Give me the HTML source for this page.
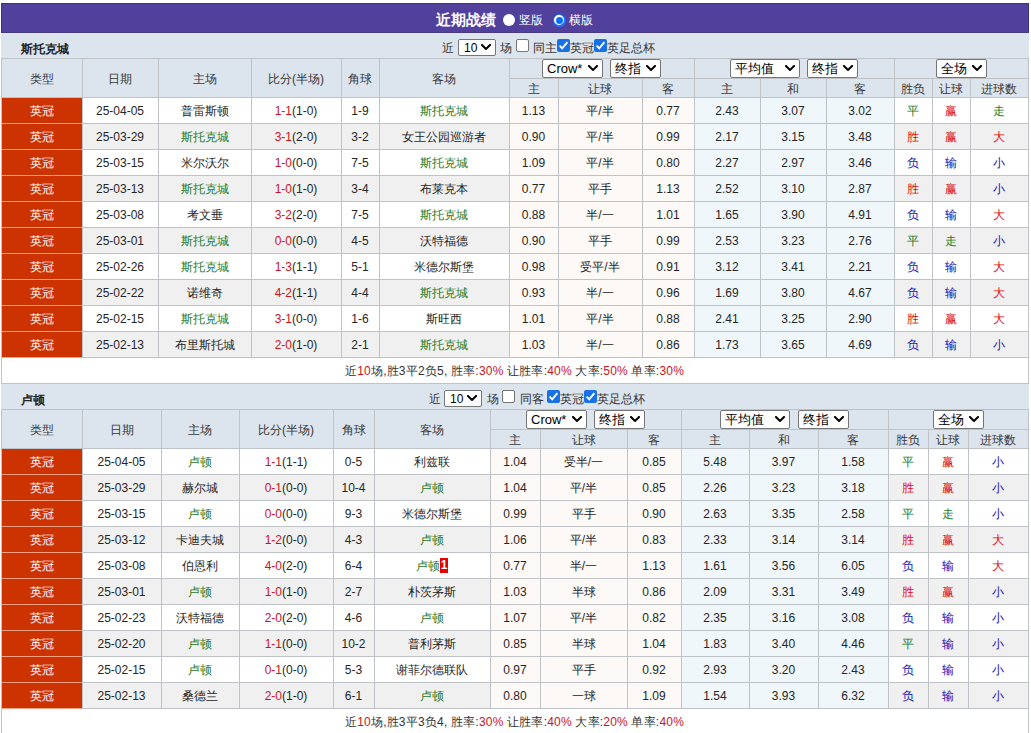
<!DOCTYPE html>
<html><head><meta charset="utf-8"><style>
html,body{margin:0;padding:0;background:#fff}
body{width:1031px;height:733px;overflow:hidden;position:relative;font-family:"Liberation Sans",sans-serif;font-size:12px;color:#262626}
.a{position:absolute;white-space:nowrap}
.t{text-align:center}
</style></head><body>
<div class="a" style="left:1px;top:3px;width:1026px;height:28px;background:#52419c;border:1px solid #3e3279;border-bottom-color:#46398a"></div>
<div class="a" style="left:436px;top:5px;height:30px;line-height:30px;font-size:15px;font-weight:bold;color:#fff">近期战绩</div>
<div class="a" style="left:503px;top:14px;width:12px;height:12px;border-radius:50%;background:#fff"></div>
<div class="a" style="left:519px;top:5px;height:30px;line-height:30px;font-size:12px;color:#fff">竖版</div>
<div class="a" style="left:552.5px;top:13.5px;width:13px;height:13px;border-radius:50%;background:#1a75ff"></div><div class="a" style="left:554px;top:15px;width:10px;height:10px;border-radius:50%;background:#fff"></div><div class="a" style="left:555.5px;top:16.5px;width:7px;height:7px;border-radius:50%;background:#0b6cf8"></div>
<div class="a" style="left:569px;top:5px;height:30px;line-height:30px;font-size:12px;color:#fff">横版</div>
<div class="a" style="left:1px;top:33px;width:1028px;height:25px;background:#dce4ee"></div>
<div class="a" style="left:21px;top:37px;height:25px;line-height:25px;font-weight:bold;color:#222">斯托克城</div>
<div class="a" style="left:442px;top:41px;line-height:14px;color:#333">近</div>
<div class="a" style="left:458px;top:39px;width:36px;height:15px;background:#fff;border:1px solid #767676;border-radius:2px"></div>
<div class="a" style="left:464px;top:40px;height:17px;line-height:17px;font-size:12px;color:#000;font-family:"Liberation Mono",monospace;letter-spacing:0.3px">10</div>
<svg class="a" style="left:481px;top:44px" width="10" height="6" viewBox="0 0 10 6"><path d="M1 1 L5.0 5 L9 1" fill="none" stroke="#000" stroke-width="2" stroke-linecap="square"/></svg>
<div class="a" style="left:500px;top:41px;line-height:14px;color:#333">场</div>
<div class="a" style="left:516px;top:39px;width:11px;height:11px;background:#fff;border:1px solid #767676;border-radius:2px"></div>
<div class="a" style="left:533px;top:41px;line-height:14px;color:#333">同主</div>
<div class="a" style="left:557px;top:39px;width:13px;height:13px;background:#1872e6;border-radius:2px"></div>
<svg class="a" style="left:557px;top:39px" width="13" height="13" viewBox="0 0 13 13"><path d="M2.6 6.6 L5.2 9.4 L10.4 3.2" fill="none" stroke="#fff" stroke-width="1.9"/></svg>
<div class="a" style="left:570px;top:41px;line-height:14px;color:#333">英冠</div>
<div class="a" style="left:594px;top:39px;width:13px;height:13px;background:#1872e6;border-radius:2px"></div>
<svg class="a" style="left:594px;top:39px" width="13" height="13" viewBox="0 0 13 13"><path d="M2.6 6.6 L5.2 9.4 L10.4 3.2" fill="none" stroke="#fff" stroke-width="1.9"/></svg>
<div class="a" style="left:607px;top:41px;line-height:14px;color:#333">英足总杯</div>
<div class="a" style="left:1px;top:58px;width:1028px;height:39px;background:#dce4ee"></div>
<div class="a" style="left:1px;top:58px;width:1028px;height:1px;background:#bfc2c6"></div>
<div class="a" style="left:509px;top:78px;width:520px;height:1px;background:#bfc2c6"></div>
<div class="a" style="left:1px;top:97px;width:1028px;height:1px;background:#bfc2c6"></div>
<div class="a" style="left:1px;top:58px;width:1px;height:40px;background:#bfc2c6"></div>
<div class="a" style="left:82px;top:58px;width:1px;height:40px;background:#bfc2c6"></div>
<div class="a" style="left:158px;top:58px;width:1px;height:40px;background:#bfc2c6"></div>
<div class="a" style="left:251px;top:58px;width:1px;height:40px;background:#bfc2c6"></div>
<div class="a" style="left:341px;top:58px;width:1px;height:40px;background:#bfc2c6"></div>
<div class="a" style="left:379px;top:58px;width:1px;height:40px;background:#bfc2c6"></div>
<div class="a" style="left:509px;top:58px;width:1px;height:40px;background:#bfc2c6"></div>
<div class="a" style="left:558px;top:78px;width:1px;height:20px;background:#bfc2c6"></div>
<div class="a" style="left:642px;top:78px;width:1px;height:20px;background:#bfc2c6"></div>
<div class="a" style="left:694px;top:58px;width:1px;height:40px;background:#bfc2c6"></div>
<div class="a" style="left:760px;top:78px;width:1px;height:20px;background:#bfc2c6"></div>
<div class="a" style="left:826px;top:78px;width:1px;height:20px;background:#bfc2c6"></div>
<div class="a" style="left:894px;top:58px;width:1px;height:40px;background:#bfc2c6"></div>
<div class="a" style="left:932px;top:78px;width:1px;height:20px;background:#bfc2c6"></div>
<div class="a" style="left:970px;top:78px;width:1px;height:20px;background:#bfc2c6"></div>
<div class="a" style="left:1028px;top:58px;width:1px;height:40px;background:#bfc2c6"></div>
<div class="a t" style="left:1.5px;top:60px;width:80px;height:38px;line-height:38px;color:#383838">类型</div>
<div class="a t" style="left:82.5px;top:60px;width:75px;height:38px;line-height:38px;color:#383838">日期</div>
<div class="a t" style="left:158.5px;top:60px;width:92px;height:38px;line-height:38px;color:#383838">主场</div>
<div class="a t" style="left:251.5px;top:60px;width:89px;height:38px;line-height:38px;color:#383838">比分(半场)</div>
<div class="a t" style="left:341.5px;top:60px;width:37px;height:38px;line-height:38px;color:#383838">角球</div>
<div class="a t" style="left:379.5px;top:60px;width:129px;height:38px;line-height:38px;color:#383838">客场</div>
<div class="a t" style="left:509.5px;top:80px;width:48px;height:18px;line-height:18px;color:#383838">主</div>
<div class="a t" style="left:558.5px;top:80px;width:83px;height:18px;line-height:18px;color:#383838">让球</div>
<div class="a t" style="left:642.5px;top:80px;width:51px;height:18px;line-height:18px;color:#383838">客</div>
<div class="a t" style="left:694.5px;top:80px;width:65px;height:18px;line-height:18px;color:#383838">主</div>
<div class="a t" style="left:760.5px;top:80px;width:65px;height:18px;line-height:18px;color:#383838">和</div>
<div class="a t" style="left:826.5px;top:80px;width:67px;height:18px;line-height:18px;color:#383838">客</div>
<div class="a t" style="left:894.5px;top:80px;width:37px;height:18px;line-height:18px;color:#383838">胜负</div>
<div class="a t" style="left:932.5px;top:80px;width:37px;height:18px;line-height:18px;color:#383838">让球</div>
<div class="a t" style="left:970.5px;top:80px;width:57px;height:18px;line-height:18px;color:#383838">进球数</div>
<div class="a" style="left:542px;top:59px;width:59px;height:17px;background:#fff;border:1px solid #767676;border-radius:2px"></div>
<div class="a" style="left:547px;top:59px;height:19px;line-height:19px;font-size:13px;color:#000;">Crow*</div>
<svg class="a" style="left:588px;top:65px" width="10" height="6" viewBox="0 0 10 6"><path d="M1 1 L5.0 5 L9 1" fill="none" stroke="#000" stroke-width="2" stroke-linecap="square"/></svg>
<div class="a" style="left:610px;top:59px;width:49px;height:17px;background:#fff;border:1px solid #767676;border-radius:2px"></div>
<div class="a" style="left:615px;top:59px;height:19px;line-height:19px;font-size:13px;color:#000;">终指</div>
<svg class="a" style="left:646px;top:65px" width="10" height="6" viewBox="0 0 10 6"><path d="M1 1 L5.0 5 L9 1" fill="none" stroke="#000" stroke-width="2" stroke-linecap="square"/></svg>
<div class="a" style="left:730px;top:59px;width:68px;height:17px;background:#fff;border:1px solid #767676;border-radius:2px"></div>
<div class="a" style="left:735px;top:59px;height:19px;line-height:19px;font-size:13px;color:#000;">平均值</div>
<svg class="a" style="left:785px;top:65px" width="10" height="6" viewBox="0 0 10 6"><path d="M1 1 L5.0 5 L9 1" fill="none" stroke="#000" stroke-width="2" stroke-linecap="square"/></svg>
<div class="a" style="left:807px;top:59px;width:49px;height:17px;background:#fff;border:1px solid #767676;border-radius:2px"></div>
<div class="a" style="left:812px;top:59px;height:19px;line-height:19px;font-size:13px;color:#000;">终指</div>
<svg class="a" style="left:843px;top:65px" width="10" height="6" viewBox="0 0 10 6"><path d="M1 1 L5.0 5 L9 1" fill="none" stroke="#000" stroke-width="2" stroke-linecap="square"/></svg>
<div class="a" style="left:936px;top:59px;width:49px;height:17px;background:#fff;border:1px solid #767676;border-radius:2px"></div>
<div class="a" style="left:941px;top:59px;height:19px;line-height:19px;font-size:13px;color:#000;">全场</div>
<svg class="a" style="left:972px;top:65px" width="10" height="6" viewBox="0 0 10 6"><path d="M1 1 L5.0 5 L9 1" fill="none" stroke="#000" stroke-width="2" stroke-linecap="square"/></svg>
<div class="a" style="left:2px;top:98px;width:80px;height:25px;background:#cc3300"></div>
<div class="a" style="left:83px;top:98px;width:75px;height:25px;background:#ffffff"></div>
<div class="a" style="left:159px;top:98px;width:92px;height:25px;background:#ffffff"></div>
<div class="a" style="left:252px;top:98px;width:89px;height:25px;background:#ffffff"></div>
<div class="a" style="left:342px;top:98px;width:37px;height:25px;background:#ffffff"></div>
<div class="a" style="left:380px;top:98px;width:129px;height:25px;background:#ffffff"></div>
<div class="a" style="left:510px;top:98px;width:48px;height:25px;background:#fdf9f6"></div>
<div class="a" style="left:559px;top:98px;width:83px;height:25px;background:#fdf9f6"></div>
<div class="a" style="left:643px;top:98px;width:51px;height:25px;background:#fdf9f6"></div>
<div class="a" style="left:695px;top:98px;width:65px;height:25px;background:#eff7fb"></div>
<div class="a" style="left:761px;top:98px;width:65px;height:25px;background:#eff7fb"></div>
<div class="a" style="left:827px;top:98px;width:67px;height:25px;background:#eff7fb"></div>
<div class="a" style="left:895px;top:98px;width:37px;height:25px;background:#ffffff"></div>
<div class="a" style="left:933px;top:98px;width:37px;height:25px;background:#ffffff"></div>
<div class="a" style="left:971px;top:98px;width:57px;height:25px;background:#ffffff"></div>
<div class="a" style="left:1px;top:123px;width:1028px;height:1px;background:#bfc2c6"></div>
<div class="a" style="left:1px;top:97px;width:1px;height:27px;background:#bfc2c6"></div>
<div class="a" style="left:82px;top:97px;width:1px;height:27px;background:#bfc2c6"></div>
<div class="a" style="left:158px;top:97px;width:1px;height:27px;background:#bfc2c6"></div>
<div class="a" style="left:251px;top:97px;width:1px;height:27px;background:#bfc2c6"></div>
<div class="a" style="left:341px;top:97px;width:1px;height:27px;background:#bfc2c6"></div>
<div class="a" style="left:379px;top:97px;width:1px;height:27px;background:#bfc2c6"></div>
<div class="a" style="left:509px;top:97px;width:1px;height:27px;background:#bfc2c6"></div>
<div class="a" style="left:558px;top:97px;width:1px;height:27px;background:#bfc2c6"></div>
<div class="a" style="left:642px;top:97px;width:1px;height:27px;background:#bfc2c6"></div>
<div class="a" style="left:694px;top:97px;width:1px;height:27px;background:#bfc2c6"></div>
<div class="a" style="left:760px;top:97px;width:1px;height:27px;background:#bfc2c6"></div>
<div class="a" style="left:826px;top:97px;width:1px;height:27px;background:#bfc2c6"></div>
<div class="a" style="left:894px;top:97px;width:1px;height:27px;background:#bfc2c6"></div>
<div class="a" style="left:932px;top:97px;width:1px;height:27px;background:#bfc2c6"></div>
<div class="a" style="left:970px;top:97px;width:1px;height:27px;background:#bfc2c6"></div>
<div class="a" style="left:1028px;top:97px;width:1px;height:27px;background:#bfc2c6"></div>
<div class="a" style="left:2px;top:98px;width:80px;height:25px;background:#cc3300"></div>
<div class="a" style="left:2px;top:123px;width:80px;height:1px;background:#f2a081"></div>
<div class="a t" style="left:1.5px;top:98.5px;width:80px;height:25px;line-height:25px;color:#fff">英冠</div>
<div class="a t" style="left:82.5px;top:98.5px;width:75px;height:25px;line-height:25px;">25-04-05</div>
<div class="a t" style="left:158.5px;top:98.5px;width:92px;height:25px;line-height:25px;">普雷斯顿</div>
<div class="a t" style="left:251.5px;top:98.5px;width:89px;height:25px;line-height:25px;"><span style="color:#c8141e">1-1</span>(1-0)</div>
<div class="a t" style="left:341.5px;top:98.5px;width:37px;height:25px;line-height:25px;">1-9</div>
<div class="a t" style="left:379.5px;top:98.5px;width:129px;height:25px;line-height:25px;color:#1f7a1f">斯托克城</div>
<div class="a t" style="left:509.5px;top:98.5px;width:48px;height:25px;line-height:25px;">1.13</div>
<div class="a t" style="left:558.5px;top:98.5px;width:83px;height:25px;line-height:25px;">平/半</div>
<div class="a t" style="left:642.5px;top:98.5px;width:51px;height:25px;line-height:25px;">0.77</div>
<div class="a t" style="left:694.5px;top:98.5px;width:65px;height:25px;line-height:25px;">2.43</div>
<div class="a t" style="left:760.5px;top:98.5px;width:65px;height:25px;line-height:25px;">3.07</div>
<div class="a t" style="left:826.5px;top:98.5px;width:67px;height:25px;line-height:25px;">3.02</div>
<div class="a t" style="left:894.5px;top:98.5px;width:37px;height:25px;line-height:25px;color:#1f7a1f">平</div>
<div class="a t" style="left:932.5px;top:98.5px;width:37px;height:25px;line-height:25px;color:#dd0a0a">赢</div>
<div class="a t" style="left:970.5px;top:98.5px;width:57px;height:25px;line-height:25px;color:#1f7a1f">走</div>
<div class="a" style="left:2px;top:124px;width:80px;height:25px;background:#cc3300"></div>
<div class="a" style="left:83px;top:124px;width:75px;height:25px;background:#f0f0f0"></div>
<div class="a" style="left:159px;top:124px;width:92px;height:25px;background:#f0f0f0"></div>
<div class="a" style="left:252px;top:124px;width:89px;height:25px;background:#f0f0f0"></div>
<div class="a" style="left:342px;top:124px;width:37px;height:25px;background:#f0f0f0"></div>
<div class="a" style="left:380px;top:124px;width:129px;height:25px;background:#f0f0f0"></div>
<div class="a" style="left:510px;top:124px;width:48px;height:25px;background:#fdf9f6"></div>
<div class="a" style="left:559px;top:124px;width:83px;height:25px;background:#fdf9f6"></div>
<div class="a" style="left:643px;top:124px;width:51px;height:25px;background:#fdf9f6"></div>
<div class="a" style="left:695px;top:124px;width:65px;height:25px;background:#eff7fb"></div>
<div class="a" style="left:761px;top:124px;width:65px;height:25px;background:#eff7fb"></div>
<div class="a" style="left:827px;top:124px;width:67px;height:25px;background:#eff7fb"></div>
<div class="a" style="left:895px;top:124px;width:37px;height:25px;background:#f0f0f0"></div>
<div class="a" style="left:933px;top:124px;width:37px;height:25px;background:#f0f0f0"></div>
<div class="a" style="left:971px;top:124px;width:57px;height:25px;background:#f0f0f0"></div>
<div class="a" style="left:1px;top:149px;width:1028px;height:1px;background:#bfc2c6"></div>
<div class="a" style="left:1px;top:123px;width:1px;height:27px;background:#bfc2c6"></div>
<div class="a" style="left:82px;top:123px;width:1px;height:27px;background:#bfc2c6"></div>
<div class="a" style="left:158px;top:123px;width:1px;height:27px;background:#bfc2c6"></div>
<div class="a" style="left:251px;top:123px;width:1px;height:27px;background:#bfc2c6"></div>
<div class="a" style="left:341px;top:123px;width:1px;height:27px;background:#bfc2c6"></div>
<div class="a" style="left:379px;top:123px;width:1px;height:27px;background:#bfc2c6"></div>
<div class="a" style="left:509px;top:123px;width:1px;height:27px;background:#bfc2c6"></div>
<div class="a" style="left:558px;top:123px;width:1px;height:27px;background:#bfc2c6"></div>
<div class="a" style="left:642px;top:123px;width:1px;height:27px;background:#bfc2c6"></div>
<div class="a" style="left:694px;top:123px;width:1px;height:27px;background:#bfc2c6"></div>
<div class="a" style="left:760px;top:123px;width:1px;height:27px;background:#bfc2c6"></div>
<div class="a" style="left:826px;top:123px;width:1px;height:27px;background:#bfc2c6"></div>
<div class="a" style="left:894px;top:123px;width:1px;height:27px;background:#bfc2c6"></div>
<div class="a" style="left:932px;top:123px;width:1px;height:27px;background:#bfc2c6"></div>
<div class="a" style="left:970px;top:123px;width:1px;height:27px;background:#bfc2c6"></div>
<div class="a" style="left:1028px;top:123px;width:1px;height:27px;background:#bfc2c6"></div>
<div class="a" style="left:2px;top:124px;width:80px;height:25px;background:#cc3300"></div>
<div class="a" style="left:2px;top:149px;width:80px;height:1px;background:#f2a081"></div>
<div class="a t" style="left:1.5px;top:124.5px;width:80px;height:25px;line-height:25px;color:#fff">英冠</div>
<div class="a t" style="left:82.5px;top:124.5px;width:75px;height:25px;line-height:25px;">25-03-29</div>
<div class="a t" style="left:158.5px;top:124.5px;width:92px;height:25px;line-height:25px;color:#1f7a1f">斯托克城</div>
<div class="a t" style="left:251.5px;top:124.5px;width:89px;height:25px;line-height:25px;"><span style="color:#c8141e">3-1</span>(2-0)</div>
<div class="a t" style="left:341.5px;top:124.5px;width:37px;height:25px;line-height:25px;">3-2</div>
<div class="a t" style="left:379.5px;top:124.5px;width:129px;height:25px;line-height:25px;">女王公园巡游者</div>
<div class="a t" style="left:509.5px;top:124.5px;width:48px;height:25px;line-height:25px;">0.90</div>
<div class="a t" style="left:558.5px;top:124.5px;width:83px;height:25px;line-height:25px;">平/半</div>
<div class="a t" style="left:642.5px;top:124.5px;width:51px;height:25px;line-height:25px;">0.99</div>
<div class="a t" style="left:694.5px;top:124.5px;width:65px;height:25px;line-height:25px;">2.17</div>
<div class="a t" style="left:760.5px;top:124.5px;width:65px;height:25px;line-height:25px;">3.15</div>
<div class="a t" style="left:826.5px;top:124.5px;width:67px;height:25px;line-height:25px;">3.48</div>
<div class="a t" style="left:894.5px;top:124.5px;width:37px;height:25px;line-height:25px;color:#dd0a0a">胜</div>
<div class="a t" style="left:932.5px;top:124.5px;width:37px;height:25px;line-height:25px;color:#dd0a0a">赢</div>
<div class="a t" style="left:970.5px;top:124.5px;width:57px;height:25px;line-height:25px;color:#dd0a0a">大</div>
<div class="a" style="left:2px;top:150px;width:80px;height:25px;background:#cc3300"></div>
<div class="a" style="left:83px;top:150px;width:75px;height:25px;background:#ffffff"></div>
<div class="a" style="left:159px;top:150px;width:92px;height:25px;background:#ffffff"></div>
<div class="a" style="left:252px;top:150px;width:89px;height:25px;background:#ffffff"></div>
<div class="a" style="left:342px;top:150px;width:37px;height:25px;background:#ffffff"></div>
<div class="a" style="left:380px;top:150px;width:129px;height:25px;background:#ffffff"></div>
<div class="a" style="left:510px;top:150px;width:48px;height:25px;background:#fdf9f6"></div>
<div class="a" style="left:559px;top:150px;width:83px;height:25px;background:#fdf9f6"></div>
<div class="a" style="left:643px;top:150px;width:51px;height:25px;background:#fdf9f6"></div>
<div class="a" style="left:695px;top:150px;width:65px;height:25px;background:#eff7fb"></div>
<div class="a" style="left:761px;top:150px;width:65px;height:25px;background:#eff7fb"></div>
<div class="a" style="left:827px;top:150px;width:67px;height:25px;background:#eff7fb"></div>
<div class="a" style="left:895px;top:150px;width:37px;height:25px;background:#ffffff"></div>
<div class="a" style="left:933px;top:150px;width:37px;height:25px;background:#ffffff"></div>
<div class="a" style="left:971px;top:150px;width:57px;height:25px;background:#ffffff"></div>
<div class="a" style="left:1px;top:175px;width:1028px;height:1px;background:#bfc2c6"></div>
<div class="a" style="left:1px;top:149px;width:1px;height:27px;background:#bfc2c6"></div>
<div class="a" style="left:82px;top:149px;width:1px;height:27px;background:#bfc2c6"></div>
<div class="a" style="left:158px;top:149px;width:1px;height:27px;background:#bfc2c6"></div>
<div class="a" style="left:251px;top:149px;width:1px;height:27px;background:#bfc2c6"></div>
<div class="a" style="left:341px;top:149px;width:1px;height:27px;background:#bfc2c6"></div>
<div class="a" style="left:379px;top:149px;width:1px;height:27px;background:#bfc2c6"></div>
<div class="a" style="left:509px;top:149px;width:1px;height:27px;background:#bfc2c6"></div>
<div class="a" style="left:558px;top:149px;width:1px;height:27px;background:#bfc2c6"></div>
<div class="a" style="left:642px;top:149px;width:1px;height:27px;background:#bfc2c6"></div>
<div class="a" style="left:694px;top:149px;width:1px;height:27px;background:#bfc2c6"></div>
<div class="a" style="left:760px;top:149px;width:1px;height:27px;background:#bfc2c6"></div>
<div class="a" style="left:826px;top:149px;width:1px;height:27px;background:#bfc2c6"></div>
<div class="a" style="left:894px;top:149px;width:1px;height:27px;background:#bfc2c6"></div>
<div class="a" style="left:932px;top:149px;width:1px;height:27px;background:#bfc2c6"></div>
<div class="a" style="left:970px;top:149px;width:1px;height:27px;background:#bfc2c6"></div>
<div class="a" style="left:1028px;top:149px;width:1px;height:27px;background:#bfc2c6"></div>
<div class="a" style="left:2px;top:150px;width:80px;height:25px;background:#cc3300"></div>
<div class="a" style="left:2px;top:175px;width:80px;height:1px;background:#f2a081"></div>
<div class="a t" style="left:1.5px;top:150.5px;width:80px;height:25px;line-height:25px;color:#fff">英冠</div>
<div class="a t" style="left:82.5px;top:150.5px;width:75px;height:25px;line-height:25px;">25-03-15</div>
<div class="a t" style="left:158.5px;top:150.5px;width:92px;height:25px;line-height:25px;">米尔沃尔</div>
<div class="a t" style="left:251.5px;top:150.5px;width:89px;height:25px;line-height:25px;"><span style="color:#c8141e">1-0</span>(0-0)</div>
<div class="a t" style="left:341.5px;top:150.5px;width:37px;height:25px;line-height:25px;">7-5</div>
<div class="a t" style="left:379.5px;top:150.5px;width:129px;height:25px;line-height:25px;color:#1f7a1f">斯托克城</div>
<div class="a t" style="left:509.5px;top:150.5px;width:48px;height:25px;line-height:25px;">1.09</div>
<div class="a t" style="left:558.5px;top:150.5px;width:83px;height:25px;line-height:25px;">平/半</div>
<div class="a t" style="left:642.5px;top:150.5px;width:51px;height:25px;line-height:25px;">0.80</div>
<div class="a t" style="left:694.5px;top:150.5px;width:65px;height:25px;line-height:25px;">2.27</div>
<div class="a t" style="left:760.5px;top:150.5px;width:65px;height:25px;line-height:25px;">2.97</div>
<div class="a t" style="left:826.5px;top:150.5px;width:67px;height:25px;line-height:25px;">3.46</div>
<div class="a t" style="left:894.5px;top:150.5px;width:37px;height:25px;line-height:25px;color:#1111b0">负</div>
<div class="a t" style="left:932.5px;top:150.5px;width:37px;height:25px;line-height:25px;color:#1111b0">输</div>
<div class="a t" style="left:970.5px;top:150.5px;width:57px;height:25px;line-height:25px;color:#1111b0">小</div>
<div class="a" style="left:2px;top:176px;width:80px;height:25px;background:#cc3300"></div>
<div class="a" style="left:83px;top:176px;width:75px;height:25px;background:#f0f0f0"></div>
<div class="a" style="left:159px;top:176px;width:92px;height:25px;background:#f0f0f0"></div>
<div class="a" style="left:252px;top:176px;width:89px;height:25px;background:#f0f0f0"></div>
<div class="a" style="left:342px;top:176px;width:37px;height:25px;background:#f0f0f0"></div>
<div class="a" style="left:380px;top:176px;width:129px;height:25px;background:#f0f0f0"></div>
<div class="a" style="left:510px;top:176px;width:48px;height:25px;background:#fdf9f6"></div>
<div class="a" style="left:559px;top:176px;width:83px;height:25px;background:#fdf9f6"></div>
<div class="a" style="left:643px;top:176px;width:51px;height:25px;background:#fdf9f6"></div>
<div class="a" style="left:695px;top:176px;width:65px;height:25px;background:#eff7fb"></div>
<div class="a" style="left:761px;top:176px;width:65px;height:25px;background:#eff7fb"></div>
<div class="a" style="left:827px;top:176px;width:67px;height:25px;background:#eff7fb"></div>
<div class="a" style="left:895px;top:176px;width:37px;height:25px;background:#f0f0f0"></div>
<div class="a" style="left:933px;top:176px;width:37px;height:25px;background:#f0f0f0"></div>
<div class="a" style="left:971px;top:176px;width:57px;height:25px;background:#f0f0f0"></div>
<div class="a" style="left:1px;top:201px;width:1028px;height:1px;background:#bfc2c6"></div>
<div class="a" style="left:1px;top:175px;width:1px;height:27px;background:#bfc2c6"></div>
<div class="a" style="left:82px;top:175px;width:1px;height:27px;background:#bfc2c6"></div>
<div class="a" style="left:158px;top:175px;width:1px;height:27px;background:#bfc2c6"></div>
<div class="a" style="left:251px;top:175px;width:1px;height:27px;background:#bfc2c6"></div>
<div class="a" style="left:341px;top:175px;width:1px;height:27px;background:#bfc2c6"></div>
<div class="a" style="left:379px;top:175px;width:1px;height:27px;background:#bfc2c6"></div>
<div class="a" style="left:509px;top:175px;width:1px;height:27px;background:#bfc2c6"></div>
<div class="a" style="left:558px;top:175px;width:1px;height:27px;background:#bfc2c6"></div>
<div class="a" style="left:642px;top:175px;width:1px;height:27px;background:#bfc2c6"></div>
<div class="a" style="left:694px;top:175px;width:1px;height:27px;background:#bfc2c6"></div>
<div class="a" style="left:760px;top:175px;width:1px;height:27px;background:#bfc2c6"></div>
<div class="a" style="left:826px;top:175px;width:1px;height:27px;background:#bfc2c6"></div>
<div class="a" style="left:894px;top:175px;width:1px;height:27px;background:#bfc2c6"></div>
<div class="a" style="left:932px;top:175px;width:1px;height:27px;background:#bfc2c6"></div>
<div class="a" style="left:970px;top:175px;width:1px;height:27px;background:#bfc2c6"></div>
<div class="a" style="left:1028px;top:175px;width:1px;height:27px;background:#bfc2c6"></div>
<div class="a" style="left:2px;top:176px;width:80px;height:25px;background:#cc3300"></div>
<div class="a" style="left:2px;top:201px;width:80px;height:1px;background:#f2a081"></div>
<div class="a t" style="left:1.5px;top:176.5px;width:80px;height:25px;line-height:25px;color:#fff">英冠</div>
<div class="a t" style="left:82.5px;top:176.5px;width:75px;height:25px;line-height:25px;">25-03-13</div>
<div class="a t" style="left:158.5px;top:176.5px;width:92px;height:25px;line-height:25px;color:#1f7a1f">斯托克城</div>
<div class="a t" style="left:251.5px;top:176.5px;width:89px;height:25px;line-height:25px;"><span style="color:#c8141e">1-0</span>(1-0)</div>
<div class="a t" style="left:341.5px;top:176.5px;width:37px;height:25px;line-height:25px;">3-4</div>
<div class="a t" style="left:379.5px;top:176.5px;width:129px;height:25px;line-height:25px;">布莱克本</div>
<div class="a t" style="left:509.5px;top:176.5px;width:48px;height:25px;line-height:25px;">0.77</div>
<div class="a t" style="left:558.5px;top:176.5px;width:83px;height:25px;line-height:25px;">平手</div>
<div class="a t" style="left:642.5px;top:176.5px;width:51px;height:25px;line-height:25px;">1.13</div>
<div class="a t" style="left:694.5px;top:176.5px;width:65px;height:25px;line-height:25px;">2.52</div>
<div class="a t" style="left:760.5px;top:176.5px;width:65px;height:25px;line-height:25px;">3.10</div>
<div class="a t" style="left:826.5px;top:176.5px;width:67px;height:25px;line-height:25px;">2.87</div>
<div class="a t" style="left:894.5px;top:176.5px;width:37px;height:25px;line-height:25px;color:#dd0a0a">胜</div>
<div class="a t" style="left:932.5px;top:176.5px;width:37px;height:25px;line-height:25px;color:#dd0a0a">赢</div>
<div class="a t" style="left:970.5px;top:176.5px;width:57px;height:25px;line-height:25px;color:#1111b0">小</div>
<div class="a" style="left:2px;top:202px;width:80px;height:25px;background:#cc3300"></div>
<div class="a" style="left:83px;top:202px;width:75px;height:25px;background:#ffffff"></div>
<div class="a" style="left:159px;top:202px;width:92px;height:25px;background:#ffffff"></div>
<div class="a" style="left:252px;top:202px;width:89px;height:25px;background:#ffffff"></div>
<div class="a" style="left:342px;top:202px;width:37px;height:25px;background:#ffffff"></div>
<div class="a" style="left:380px;top:202px;width:129px;height:25px;background:#ffffff"></div>
<div class="a" style="left:510px;top:202px;width:48px;height:25px;background:#fdf9f6"></div>
<div class="a" style="left:559px;top:202px;width:83px;height:25px;background:#fdf9f6"></div>
<div class="a" style="left:643px;top:202px;width:51px;height:25px;background:#fdf9f6"></div>
<div class="a" style="left:695px;top:202px;width:65px;height:25px;background:#eff7fb"></div>
<div class="a" style="left:761px;top:202px;width:65px;height:25px;background:#eff7fb"></div>
<div class="a" style="left:827px;top:202px;width:67px;height:25px;background:#eff7fb"></div>
<div class="a" style="left:895px;top:202px;width:37px;height:25px;background:#ffffff"></div>
<div class="a" style="left:933px;top:202px;width:37px;height:25px;background:#ffffff"></div>
<div class="a" style="left:971px;top:202px;width:57px;height:25px;background:#ffffff"></div>
<div class="a" style="left:1px;top:227px;width:1028px;height:1px;background:#bfc2c6"></div>
<div class="a" style="left:1px;top:201px;width:1px;height:27px;background:#bfc2c6"></div>
<div class="a" style="left:82px;top:201px;width:1px;height:27px;background:#bfc2c6"></div>
<div class="a" style="left:158px;top:201px;width:1px;height:27px;background:#bfc2c6"></div>
<div class="a" style="left:251px;top:201px;width:1px;height:27px;background:#bfc2c6"></div>
<div class="a" style="left:341px;top:201px;width:1px;height:27px;background:#bfc2c6"></div>
<div class="a" style="left:379px;top:201px;width:1px;height:27px;background:#bfc2c6"></div>
<div class="a" style="left:509px;top:201px;width:1px;height:27px;background:#bfc2c6"></div>
<div class="a" style="left:558px;top:201px;width:1px;height:27px;background:#bfc2c6"></div>
<div class="a" style="left:642px;top:201px;width:1px;height:27px;background:#bfc2c6"></div>
<div class="a" style="left:694px;top:201px;width:1px;height:27px;background:#bfc2c6"></div>
<div class="a" style="left:760px;top:201px;width:1px;height:27px;background:#bfc2c6"></div>
<div class="a" style="left:826px;top:201px;width:1px;height:27px;background:#bfc2c6"></div>
<div class="a" style="left:894px;top:201px;width:1px;height:27px;background:#bfc2c6"></div>
<div class="a" style="left:932px;top:201px;width:1px;height:27px;background:#bfc2c6"></div>
<div class="a" style="left:970px;top:201px;width:1px;height:27px;background:#bfc2c6"></div>
<div class="a" style="left:1028px;top:201px;width:1px;height:27px;background:#bfc2c6"></div>
<div class="a" style="left:2px;top:202px;width:80px;height:25px;background:#cc3300"></div>
<div class="a" style="left:2px;top:227px;width:80px;height:1px;background:#f2a081"></div>
<div class="a t" style="left:1.5px;top:202.5px;width:80px;height:25px;line-height:25px;color:#fff">英冠</div>
<div class="a t" style="left:82.5px;top:202.5px;width:75px;height:25px;line-height:25px;">25-03-08</div>
<div class="a t" style="left:158.5px;top:202.5px;width:92px;height:25px;line-height:25px;">考文垂</div>
<div class="a t" style="left:251.5px;top:202.5px;width:89px;height:25px;line-height:25px;"><span style="color:#c8141e">3-2</span>(2-0)</div>
<div class="a t" style="left:341.5px;top:202.5px;width:37px;height:25px;line-height:25px;">7-5</div>
<div class="a t" style="left:379.5px;top:202.5px;width:129px;height:25px;line-height:25px;color:#1f7a1f">斯托克城</div>
<div class="a t" style="left:509.5px;top:202.5px;width:48px;height:25px;line-height:25px;">0.88</div>
<div class="a t" style="left:558.5px;top:202.5px;width:83px;height:25px;line-height:25px;">半/一</div>
<div class="a t" style="left:642.5px;top:202.5px;width:51px;height:25px;line-height:25px;">1.01</div>
<div class="a t" style="left:694.5px;top:202.5px;width:65px;height:25px;line-height:25px;">1.65</div>
<div class="a t" style="left:760.5px;top:202.5px;width:65px;height:25px;line-height:25px;">3.90</div>
<div class="a t" style="left:826.5px;top:202.5px;width:67px;height:25px;line-height:25px;">4.91</div>
<div class="a t" style="left:894.5px;top:202.5px;width:37px;height:25px;line-height:25px;color:#1111b0">负</div>
<div class="a t" style="left:932.5px;top:202.5px;width:37px;height:25px;line-height:25px;color:#1111b0">输</div>
<div class="a t" style="left:970.5px;top:202.5px;width:57px;height:25px;line-height:25px;color:#dd0a0a">大</div>
<div class="a" style="left:2px;top:228px;width:80px;height:25px;background:#cc3300"></div>
<div class="a" style="left:83px;top:228px;width:75px;height:25px;background:#f0f0f0"></div>
<div class="a" style="left:159px;top:228px;width:92px;height:25px;background:#f0f0f0"></div>
<div class="a" style="left:252px;top:228px;width:89px;height:25px;background:#f0f0f0"></div>
<div class="a" style="left:342px;top:228px;width:37px;height:25px;background:#f0f0f0"></div>
<div class="a" style="left:380px;top:228px;width:129px;height:25px;background:#f0f0f0"></div>
<div class="a" style="left:510px;top:228px;width:48px;height:25px;background:#fdf9f6"></div>
<div class="a" style="left:559px;top:228px;width:83px;height:25px;background:#fdf9f6"></div>
<div class="a" style="left:643px;top:228px;width:51px;height:25px;background:#fdf9f6"></div>
<div class="a" style="left:695px;top:228px;width:65px;height:25px;background:#eff7fb"></div>
<div class="a" style="left:761px;top:228px;width:65px;height:25px;background:#eff7fb"></div>
<div class="a" style="left:827px;top:228px;width:67px;height:25px;background:#eff7fb"></div>
<div class="a" style="left:895px;top:228px;width:37px;height:25px;background:#f0f0f0"></div>
<div class="a" style="left:933px;top:228px;width:37px;height:25px;background:#f0f0f0"></div>
<div class="a" style="left:971px;top:228px;width:57px;height:25px;background:#f0f0f0"></div>
<div class="a" style="left:1px;top:253px;width:1028px;height:1px;background:#bfc2c6"></div>
<div class="a" style="left:1px;top:227px;width:1px;height:27px;background:#bfc2c6"></div>
<div class="a" style="left:82px;top:227px;width:1px;height:27px;background:#bfc2c6"></div>
<div class="a" style="left:158px;top:227px;width:1px;height:27px;background:#bfc2c6"></div>
<div class="a" style="left:251px;top:227px;width:1px;height:27px;background:#bfc2c6"></div>
<div class="a" style="left:341px;top:227px;width:1px;height:27px;background:#bfc2c6"></div>
<div class="a" style="left:379px;top:227px;width:1px;height:27px;background:#bfc2c6"></div>
<div class="a" style="left:509px;top:227px;width:1px;height:27px;background:#bfc2c6"></div>
<div class="a" style="left:558px;top:227px;width:1px;height:27px;background:#bfc2c6"></div>
<div class="a" style="left:642px;top:227px;width:1px;height:27px;background:#bfc2c6"></div>
<div class="a" style="left:694px;top:227px;width:1px;height:27px;background:#bfc2c6"></div>
<div class="a" style="left:760px;top:227px;width:1px;height:27px;background:#bfc2c6"></div>
<div class="a" style="left:826px;top:227px;width:1px;height:27px;background:#bfc2c6"></div>
<div class="a" style="left:894px;top:227px;width:1px;height:27px;background:#bfc2c6"></div>
<div class="a" style="left:932px;top:227px;width:1px;height:27px;background:#bfc2c6"></div>
<div class="a" style="left:970px;top:227px;width:1px;height:27px;background:#bfc2c6"></div>
<div class="a" style="left:1028px;top:227px;width:1px;height:27px;background:#bfc2c6"></div>
<div class="a" style="left:2px;top:228px;width:80px;height:25px;background:#cc3300"></div>
<div class="a" style="left:2px;top:253px;width:80px;height:1px;background:#f2a081"></div>
<div class="a t" style="left:1.5px;top:228.5px;width:80px;height:25px;line-height:25px;color:#fff">英冠</div>
<div class="a t" style="left:82.5px;top:228.5px;width:75px;height:25px;line-height:25px;">25-03-01</div>
<div class="a t" style="left:158.5px;top:228.5px;width:92px;height:25px;line-height:25px;color:#1f7a1f">斯托克城</div>
<div class="a t" style="left:251.5px;top:228.5px;width:89px;height:25px;line-height:25px;"><span style="color:#c8141e">0-0</span>(0-0)</div>
<div class="a t" style="left:341.5px;top:228.5px;width:37px;height:25px;line-height:25px;">4-5</div>
<div class="a t" style="left:379.5px;top:228.5px;width:129px;height:25px;line-height:25px;">沃特福德</div>
<div class="a t" style="left:509.5px;top:228.5px;width:48px;height:25px;line-height:25px;">0.90</div>
<div class="a t" style="left:558.5px;top:228.5px;width:83px;height:25px;line-height:25px;">平手</div>
<div class="a t" style="left:642.5px;top:228.5px;width:51px;height:25px;line-height:25px;">0.99</div>
<div class="a t" style="left:694.5px;top:228.5px;width:65px;height:25px;line-height:25px;">2.53</div>
<div class="a t" style="left:760.5px;top:228.5px;width:65px;height:25px;line-height:25px;">3.23</div>
<div class="a t" style="left:826.5px;top:228.5px;width:67px;height:25px;line-height:25px;">2.76</div>
<div class="a t" style="left:894.5px;top:228.5px;width:37px;height:25px;line-height:25px;color:#1f7a1f">平</div>
<div class="a t" style="left:932.5px;top:228.5px;width:37px;height:25px;line-height:25px;color:#1f7a1f">走</div>
<div class="a t" style="left:970.5px;top:228.5px;width:57px;height:25px;line-height:25px;color:#1111b0">小</div>
<div class="a" style="left:2px;top:254px;width:80px;height:25px;background:#cc3300"></div>
<div class="a" style="left:83px;top:254px;width:75px;height:25px;background:#ffffff"></div>
<div class="a" style="left:159px;top:254px;width:92px;height:25px;background:#ffffff"></div>
<div class="a" style="left:252px;top:254px;width:89px;height:25px;background:#ffffff"></div>
<div class="a" style="left:342px;top:254px;width:37px;height:25px;background:#ffffff"></div>
<div class="a" style="left:380px;top:254px;width:129px;height:25px;background:#ffffff"></div>
<div class="a" style="left:510px;top:254px;width:48px;height:25px;background:#fdf9f6"></div>
<div class="a" style="left:559px;top:254px;width:83px;height:25px;background:#fdf9f6"></div>
<div class="a" style="left:643px;top:254px;width:51px;height:25px;background:#fdf9f6"></div>
<div class="a" style="left:695px;top:254px;width:65px;height:25px;background:#eff7fb"></div>
<div class="a" style="left:761px;top:254px;width:65px;height:25px;background:#eff7fb"></div>
<div class="a" style="left:827px;top:254px;width:67px;height:25px;background:#eff7fb"></div>
<div class="a" style="left:895px;top:254px;width:37px;height:25px;background:#ffffff"></div>
<div class="a" style="left:933px;top:254px;width:37px;height:25px;background:#ffffff"></div>
<div class="a" style="left:971px;top:254px;width:57px;height:25px;background:#ffffff"></div>
<div class="a" style="left:1px;top:279px;width:1028px;height:1px;background:#bfc2c6"></div>
<div class="a" style="left:1px;top:253px;width:1px;height:27px;background:#bfc2c6"></div>
<div class="a" style="left:82px;top:253px;width:1px;height:27px;background:#bfc2c6"></div>
<div class="a" style="left:158px;top:253px;width:1px;height:27px;background:#bfc2c6"></div>
<div class="a" style="left:251px;top:253px;width:1px;height:27px;background:#bfc2c6"></div>
<div class="a" style="left:341px;top:253px;width:1px;height:27px;background:#bfc2c6"></div>
<div class="a" style="left:379px;top:253px;width:1px;height:27px;background:#bfc2c6"></div>
<div class="a" style="left:509px;top:253px;width:1px;height:27px;background:#bfc2c6"></div>
<div class="a" style="left:558px;top:253px;width:1px;height:27px;background:#bfc2c6"></div>
<div class="a" style="left:642px;top:253px;width:1px;height:27px;background:#bfc2c6"></div>
<div class="a" style="left:694px;top:253px;width:1px;height:27px;background:#bfc2c6"></div>
<div class="a" style="left:760px;top:253px;width:1px;height:27px;background:#bfc2c6"></div>
<div class="a" style="left:826px;top:253px;width:1px;height:27px;background:#bfc2c6"></div>
<div class="a" style="left:894px;top:253px;width:1px;height:27px;background:#bfc2c6"></div>
<div class="a" style="left:932px;top:253px;width:1px;height:27px;background:#bfc2c6"></div>
<div class="a" style="left:970px;top:253px;width:1px;height:27px;background:#bfc2c6"></div>
<div class="a" style="left:1028px;top:253px;width:1px;height:27px;background:#bfc2c6"></div>
<div class="a" style="left:2px;top:254px;width:80px;height:25px;background:#cc3300"></div>
<div class="a" style="left:2px;top:279px;width:80px;height:1px;background:#f2a081"></div>
<div class="a t" style="left:1.5px;top:254.5px;width:80px;height:25px;line-height:25px;color:#fff">英冠</div>
<div class="a t" style="left:82.5px;top:254.5px;width:75px;height:25px;line-height:25px;">25-02-26</div>
<div class="a t" style="left:158.5px;top:254.5px;width:92px;height:25px;line-height:25px;color:#1f7a1f">斯托克城</div>
<div class="a t" style="left:251.5px;top:254.5px;width:89px;height:25px;line-height:25px;"><span style="color:#c8141e">1-3</span>(1-1)</div>
<div class="a t" style="left:341.5px;top:254.5px;width:37px;height:25px;line-height:25px;">5-1</div>
<div class="a t" style="left:379.5px;top:254.5px;width:129px;height:25px;line-height:25px;">米德尔斯堡</div>
<div class="a t" style="left:509.5px;top:254.5px;width:48px;height:25px;line-height:25px;">0.98</div>
<div class="a t" style="left:558.5px;top:254.5px;width:83px;height:25px;line-height:25px;">受平/半</div>
<div class="a t" style="left:642.5px;top:254.5px;width:51px;height:25px;line-height:25px;">0.91</div>
<div class="a t" style="left:694.5px;top:254.5px;width:65px;height:25px;line-height:25px;">3.12</div>
<div class="a t" style="left:760.5px;top:254.5px;width:65px;height:25px;line-height:25px;">3.41</div>
<div class="a t" style="left:826.5px;top:254.5px;width:67px;height:25px;line-height:25px;">2.21</div>
<div class="a t" style="left:894.5px;top:254.5px;width:37px;height:25px;line-height:25px;color:#1111b0">负</div>
<div class="a t" style="left:932.5px;top:254.5px;width:37px;height:25px;line-height:25px;color:#1111b0">输</div>
<div class="a t" style="left:970.5px;top:254.5px;width:57px;height:25px;line-height:25px;color:#dd0a0a">大</div>
<div class="a" style="left:2px;top:280px;width:80px;height:25px;background:#cc3300"></div>
<div class="a" style="left:83px;top:280px;width:75px;height:25px;background:#f0f0f0"></div>
<div class="a" style="left:159px;top:280px;width:92px;height:25px;background:#f0f0f0"></div>
<div class="a" style="left:252px;top:280px;width:89px;height:25px;background:#f0f0f0"></div>
<div class="a" style="left:342px;top:280px;width:37px;height:25px;background:#f0f0f0"></div>
<div class="a" style="left:380px;top:280px;width:129px;height:25px;background:#f0f0f0"></div>
<div class="a" style="left:510px;top:280px;width:48px;height:25px;background:#fdf9f6"></div>
<div class="a" style="left:559px;top:280px;width:83px;height:25px;background:#fdf9f6"></div>
<div class="a" style="left:643px;top:280px;width:51px;height:25px;background:#fdf9f6"></div>
<div class="a" style="left:695px;top:280px;width:65px;height:25px;background:#eff7fb"></div>
<div class="a" style="left:761px;top:280px;width:65px;height:25px;background:#eff7fb"></div>
<div class="a" style="left:827px;top:280px;width:67px;height:25px;background:#eff7fb"></div>
<div class="a" style="left:895px;top:280px;width:37px;height:25px;background:#f0f0f0"></div>
<div class="a" style="left:933px;top:280px;width:37px;height:25px;background:#f0f0f0"></div>
<div class="a" style="left:971px;top:280px;width:57px;height:25px;background:#f0f0f0"></div>
<div class="a" style="left:1px;top:305px;width:1028px;height:1px;background:#bfc2c6"></div>
<div class="a" style="left:1px;top:279px;width:1px;height:27px;background:#bfc2c6"></div>
<div class="a" style="left:82px;top:279px;width:1px;height:27px;background:#bfc2c6"></div>
<div class="a" style="left:158px;top:279px;width:1px;height:27px;background:#bfc2c6"></div>
<div class="a" style="left:251px;top:279px;width:1px;height:27px;background:#bfc2c6"></div>
<div class="a" style="left:341px;top:279px;width:1px;height:27px;background:#bfc2c6"></div>
<div class="a" style="left:379px;top:279px;width:1px;height:27px;background:#bfc2c6"></div>
<div class="a" style="left:509px;top:279px;width:1px;height:27px;background:#bfc2c6"></div>
<div class="a" style="left:558px;top:279px;width:1px;height:27px;background:#bfc2c6"></div>
<div class="a" style="left:642px;top:279px;width:1px;height:27px;background:#bfc2c6"></div>
<div class="a" style="left:694px;top:279px;width:1px;height:27px;background:#bfc2c6"></div>
<div class="a" style="left:760px;top:279px;width:1px;height:27px;background:#bfc2c6"></div>
<div class="a" style="left:826px;top:279px;width:1px;height:27px;background:#bfc2c6"></div>
<div class="a" style="left:894px;top:279px;width:1px;height:27px;background:#bfc2c6"></div>
<div class="a" style="left:932px;top:279px;width:1px;height:27px;background:#bfc2c6"></div>
<div class="a" style="left:970px;top:279px;width:1px;height:27px;background:#bfc2c6"></div>
<div class="a" style="left:1028px;top:279px;width:1px;height:27px;background:#bfc2c6"></div>
<div class="a" style="left:2px;top:280px;width:80px;height:25px;background:#cc3300"></div>
<div class="a" style="left:2px;top:305px;width:80px;height:1px;background:#f2a081"></div>
<div class="a t" style="left:1.5px;top:280.5px;width:80px;height:25px;line-height:25px;color:#fff">英冠</div>
<div class="a t" style="left:82.5px;top:280.5px;width:75px;height:25px;line-height:25px;">25-02-22</div>
<div class="a t" style="left:158.5px;top:280.5px;width:92px;height:25px;line-height:25px;">诺维奇</div>
<div class="a t" style="left:251.5px;top:280.5px;width:89px;height:25px;line-height:25px;"><span style="color:#c8141e">4-2</span>(1-1)</div>
<div class="a t" style="left:341.5px;top:280.5px;width:37px;height:25px;line-height:25px;">4-4</div>
<div class="a t" style="left:379.5px;top:280.5px;width:129px;height:25px;line-height:25px;color:#1f7a1f">斯托克城</div>
<div class="a t" style="left:509.5px;top:280.5px;width:48px;height:25px;line-height:25px;">0.93</div>
<div class="a t" style="left:558.5px;top:280.5px;width:83px;height:25px;line-height:25px;">半/一</div>
<div class="a t" style="left:642.5px;top:280.5px;width:51px;height:25px;line-height:25px;">0.96</div>
<div class="a t" style="left:694.5px;top:280.5px;width:65px;height:25px;line-height:25px;">1.69</div>
<div class="a t" style="left:760.5px;top:280.5px;width:65px;height:25px;line-height:25px;">3.80</div>
<div class="a t" style="left:826.5px;top:280.5px;width:67px;height:25px;line-height:25px;">4.67</div>
<div class="a t" style="left:894.5px;top:280.5px;width:37px;height:25px;line-height:25px;color:#1111b0">负</div>
<div class="a t" style="left:932.5px;top:280.5px;width:37px;height:25px;line-height:25px;color:#1111b0">输</div>
<div class="a t" style="left:970.5px;top:280.5px;width:57px;height:25px;line-height:25px;color:#dd0a0a">大</div>
<div class="a" style="left:2px;top:306px;width:80px;height:25px;background:#cc3300"></div>
<div class="a" style="left:83px;top:306px;width:75px;height:25px;background:#ffffff"></div>
<div class="a" style="left:159px;top:306px;width:92px;height:25px;background:#ffffff"></div>
<div class="a" style="left:252px;top:306px;width:89px;height:25px;background:#ffffff"></div>
<div class="a" style="left:342px;top:306px;width:37px;height:25px;background:#ffffff"></div>
<div class="a" style="left:380px;top:306px;width:129px;height:25px;background:#ffffff"></div>
<div class="a" style="left:510px;top:306px;width:48px;height:25px;background:#fdf9f6"></div>
<div class="a" style="left:559px;top:306px;width:83px;height:25px;background:#fdf9f6"></div>
<div class="a" style="left:643px;top:306px;width:51px;height:25px;background:#fdf9f6"></div>
<div class="a" style="left:695px;top:306px;width:65px;height:25px;background:#eff7fb"></div>
<div class="a" style="left:761px;top:306px;width:65px;height:25px;background:#eff7fb"></div>
<div class="a" style="left:827px;top:306px;width:67px;height:25px;background:#eff7fb"></div>
<div class="a" style="left:895px;top:306px;width:37px;height:25px;background:#ffffff"></div>
<div class="a" style="left:933px;top:306px;width:37px;height:25px;background:#ffffff"></div>
<div class="a" style="left:971px;top:306px;width:57px;height:25px;background:#ffffff"></div>
<div class="a" style="left:1px;top:331px;width:1028px;height:1px;background:#bfc2c6"></div>
<div class="a" style="left:1px;top:305px;width:1px;height:27px;background:#bfc2c6"></div>
<div class="a" style="left:82px;top:305px;width:1px;height:27px;background:#bfc2c6"></div>
<div class="a" style="left:158px;top:305px;width:1px;height:27px;background:#bfc2c6"></div>
<div class="a" style="left:251px;top:305px;width:1px;height:27px;background:#bfc2c6"></div>
<div class="a" style="left:341px;top:305px;width:1px;height:27px;background:#bfc2c6"></div>
<div class="a" style="left:379px;top:305px;width:1px;height:27px;background:#bfc2c6"></div>
<div class="a" style="left:509px;top:305px;width:1px;height:27px;background:#bfc2c6"></div>
<div class="a" style="left:558px;top:305px;width:1px;height:27px;background:#bfc2c6"></div>
<div class="a" style="left:642px;top:305px;width:1px;height:27px;background:#bfc2c6"></div>
<div class="a" style="left:694px;top:305px;width:1px;height:27px;background:#bfc2c6"></div>
<div class="a" style="left:760px;top:305px;width:1px;height:27px;background:#bfc2c6"></div>
<div class="a" style="left:826px;top:305px;width:1px;height:27px;background:#bfc2c6"></div>
<div class="a" style="left:894px;top:305px;width:1px;height:27px;background:#bfc2c6"></div>
<div class="a" style="left:932px;top:305px;width:1px;height:27px;background:#bfc2c6"></div>
<div class="a" style="left:970px;top:305px;width:1px;height:27px;background:#bfc2c6"></div>
<div class="a" style="left:1028px;top:305px;width:1px;height:27px;background:#bfc2c6"></div>
<div class="a" style="left:2px;top:306px;width:80px;height:25px;background:#cc3300"></div>
<div class="a" style="left:2px;top:331px;width:80px;height:1px;background:#f2a081"></div>
<div class="a t" style="left:1.5px;top:306.5px;width:80px;height:25px;line-height:25px;color:#fff">英冠</div>
<div class="a t" style="left:82.5px;top:306.5px;width:75px;height:25px;line-height:25px;">25-02-15</div>
<div class="a t" style="left:158.5px;top:306.5px;width:92px;height:25px;line-height:25px;color:#1f7a1f">斯托克城</div>
<div class="a t" style="left:251.5px;top:306.5px;width:89px;height:25px;line-height:25px;"><span style="color:#c8141e">3-1</span>(0-0)</div>
<div class="a t" style="left:341.5px;top:306.5px;width:37px;height:25px;line-height:25px;">1-6</div>
<div class="a t" style="left:379.5px;top:306.5px;width:129px;height:25px;line-height:25px;">斯旺西</div>
<div class="a t" style="left:509.5px;top:306.5px;width:48px;height:25px;line-height:25px;">1.01</div>
<div class="a t" style="left:558.5px;top:306.5px;width:83px;height:25px;line-height:25px;">平/半</div>
<div class="a t" style="left:642.5px;top:306.5px;width:51px;height:25px;line-height:25px;">0.88</div>
<div class="a t" style="left:694.5px;top:306.5px;width:65px;height:25px;line-height:25px;">2.41</div>
<div class="a t" style="left:760.5px;top:306.5px;width:65px;height:25px;line-height:25px;">3.25</div>
<div class="a t" style="left:826.5px;top:306.5px;width:67px;height:25px;line-height:25px;">2.90</div>
<div class="a t" style="left:894.5px;top:306.5px;width:37px;height:25px;line-height:25px;color:#dd0a0a">胜</div>
<div class="a t" style="left:932.5px;top:306.5px;width:37px;height:25px;line-height:25px;color:#dd0a0a">赢</div>
<div class="a t" style="left:970.5px;top:306.5px;width:57px;height:25px;line-height:25px;color:#dd0a0a">大</div>
<div class="a" style="left:2px;top:332px;width:80px;height:25px;background:#cc3300"></div>
<div class="a" style="left:83px;top:332px;width:75px;height:25px;background:#f0f0f0"></div>
<div class="a" style="left:159px;top:332px;width:92px;height:25px;background:#f0f0f0"></div>
<div class="a" style="left:252px;top:332px;width:89px;height:25px;background:#f0f0f0"></div>
<div class="a" style="left:342px;top:332px;width:37px;height:25px;background:#f0f0f0"></div>
<div class="a" style="left:380px;top:332px;width:129px;height:25px;background:#f0f0f0"></div>
<div class="a" style="left:510px;top:332px;width:48px;height:25px;background:#fdf9f6"></div>
<div class="a" style="left:559px;top:332px;width:83px;height:25px;background:#fdf9f6"></div>
<div class="a" style="left:643px;top:332px;width:51px;height:25px;background:#fdf9f6"></div>
<div class="a" style="left:695px;top:332px;width:65px;height:25px;background:#eff7fb"></div>
<div class="a" style="left:761px;top:332px;width:65px;height:25px;background:#eff7fb"></div>
<div class="a" style="left:827px;top:332px;width:67px;height:25px;background:#eff7fb"></div>
<div class="a" style="left:895px;top:332px;width:37px;height:25px;background:#f0f0f0"></div>
<div class="a" style="left:933px;top:332px;width:37px;height:25px;background:#f0f0f0"></div>
<div class="a" style="left:971px;top:332px;width:57px;height:25px;background:#f0f0f0"></div>
<div class="a" style="left:1px;top:357px;width:1028px;height:1px;background:#bfc2c6"></div>
<div class="a" style="left:1px;top:331px;width:1px;height:27px;background:#bfc2c6"></div>
<div class="a" style="left:82px;top:331px;width:1px;height:27px;background:#bfc2c6"></div>
<div class="a" style="left:158px;top:331px;width:1px;height:27px;background:#bfc2c6"></div>
<div class="a" style="left:251px;top:331px;width:1px;height:27px;background:#bfc2c6"></div>
<div class="a" style="left:341px;top:331px;width:1px;height:27px;background:#bfc2c6"></div>
<div class="a" style="left:379px;top:331px;width:1px;height:27px;background:#bfc2c6"></div>
<div class="a" style="left:509px;top:331px;width:1px;height:27px;background:#bfc2c6"></div>
<div class="a" style="left:558px;top:331px;width:1px;height:27px;background:#bfc2c6"></div>
<div class="a" style="left:642px;top:331px;width:1px;height:27px;background:#bfc2c6"></div>
<div class="a" style="left:694px;top:331px;width:1px;height:27px;background:#bfc2c6"></div>
<div class="a" style="left:760px;top:331px;width:1px;height:27px;background:#bfc2c6"></div>
<div class="a" style="left:826px;top:331px;width:1px;height:27px;background:#bfc2c6"></div>
<div class="a" style="left:894px;top:331px;width:1px;height:27px;background:#bfc2c6"></div>
<div class="a" style="left:932px;top:331px;width:1px;height:27px;background:#bfc2c6"></div>
<div class="a" style="left:970px;top:331px;width:1px;height:27px;background:#bfc2c6"></div>
<div class="a" style="left:1028px;top:331px;width:1px;height:27px;background:#bfc2c6"></div>
<div class="a" style="left:2px;top:332px;width:80px;height:25px;background:#cc3300"></div>
<div class="a" style="left:2px;top:357px;width:80px;height:1px;background:#f2a081"></div>
<div class="a t" style="left:1.5px;top:332.5px;width:80px;height:25px;line-height:25px;color:#fff">英冠</div>
<div class="a t" style="left:82.5px;top:332.5px;width:75px;height:25px;line-height:25px;">25-02-13</div>
<div class="a t" style="left:158.5px;top:332.5px;width:92px;height:25px;line-height:25px;">布里斯托城</div>
<div class="a t" style="left:251.5px;top:332.5px;width:89px;height:25px;line-height:25px;"><span style="color:#c8141e">2-0</span>(1-0)</div>
<div class="a t" style="left:341.5px;top:332.5px;width:37px;height:25px;line-height:25px;">2-1</div>
<div class="a t" style="left:379.5px;top:332.5px;width:129px;height:25px;line-height:25px;color:#1f7a1f">斯托克城</div>
<div class="a t" style="left:509.5px;top:332.5px;width:48px;height:25px;line-height:25px;">1.03</div>
<div class="a t" style="left:558.5px;top:332.5px;width:83px;height:25px;line-height:25px;">半/一</div>
<div class="a t" style="left:642.5px;top:332.5px;width:51px;height:25px;line-height:25px;">0.86</div>
<div class="a t" style="left:694.5px;top:332.5px;width:65px;height:25px;line-height:25px;">1.73</div>
<div class="a t" style="left:760.5px;top:332.5px;width:65px;height:25px;line-height:25px;">3.65</div>
<div class="a t" style="left:826.5px;top:332.5px;width:67px;height:25px;line-height:25px;">4.69</div>
<div class="a t" style="left:894.5px;top:332.5px;width:37px;height:25px;line-height:25px;color:#1111b0">负</div>
<div class="a t" style="left:932.5px;top:332.5px;width:37px;height:25px;line-height:25px;color:#1111b0">输</div>
<div class="a t" style="left:970.5px;top:332.5px;width:57px;height:25px;line-height:25px;color:#1111b0">小</div>
<div class="a" style="left:1px;top:358px;width:1028px;height:25px;background:#fff"></div>
<div class="a" style="left:1px;top:357px;width:1px;height:27px;background:#bfc2c6"></div>
<div class="a" style="left:1028px;top:357px;width:1px;height:27px;background:#bfc2c6"></div>
<div class="a" style="left:1px;top:383px;width:1028px;height:1px;background:#bfc2c6"></div>
<div class="a t" style="left:1.5px;top:358.5px;width:1026px;height:25px;line-height:25px;color:#333;letter-spacing:0.2px">近<span style="color:#c8141e">10</span>场,胜3平2负5, 胜率:<span style="color:#c8141e">30%</span> 让胜率:<span style="color:#c8141e">40%</span> 大率:<span style="color:#c8141e">50%</span> 单率:<span style="color:#c8141e">30%</span></div>
<div class="a" style="left:1px;top:33px;width:1028px;height:1px;background:#e4e3f6"></div>
<div class="a" style="left:1px;top:384px;width:1028px;height:25px;background:#dce4ee"></div>
<div class="a" style="left:21px;top:388px;height:25px;line-height:25px;font-weight:bold;color:#222">卢顿</div>
<div class="a" style="left:429px;top:392px;line-height:14px;color:#333">近</div>
<div class="a" style="left:444px;top:390px;width:36px;height:15px;background:#fff;border:1px solid #767676;border-radius:2px"></div>
<div class="a" style="left:450px;top:391px;height:17px;line-height:17px;font-size:12px;color:#000;font-family:"Liberation Mono",monospace;letter-spacing:0.3px">10</div>
<svg class="a" style="left:467px;top:395px" width="10" height="6" viewBox="0 0 10 6"><path d="M1 1 L5.0 5 L9 1" fill="none" stroke="#000" stroke-width="2" stroke-linecap="square"/></svg>
<div class="a" style="left:487px;top:392px;line-height:14px;color:#333">场</div>
<div class="a" style="left:502px;top:390px;width:11px;height:11px;background:#fff;border:1px solid #767676;border-radius:2px"></div>
<div class="a" style="left:520px;top:392px;line-height:14px;color:#333">同客</div>
<div class="a" style="left:547px;top:390px;width:13px;height:13px;background:#1872e6;border-radius:2px"></div>
<svg class="a" style="left:547px;top:390px" width="13" height="13" viewBox="0 0 13 13"><path d="M2.6 6.6 L5.2 9.4 L10.4 3.2" fill="none" stroke="#fff" stroke-width="1.9"/></svg>
<div class="a" style="left:560px;top:392px;line-height:14px;color:#333">英冠</div>
<div class="a" style="left:584px;top:390px;width:13px;height:13px;background:#1872e6;border-radius:2px"></div>
<svg class="a" style="left:584px;top:390px" width="13" height="13" viewBox="0 0 13 13"><path d="M2.6 6.6 L5.2 9.4 L10.4 3.2" fill="none" stroke="#fff" stroke-width="1.9"/></svg>
<div class="a" style="left:597px;top:392px;line-height:14px;color:#333">英足总杯</div>
<div class="a" style="left:1px;top:409px;width:1028px;height:39px;background:#dce4ee"></div>
<div class="a" style="left:1px;top:409px;width:1028px;height:1px;background:#bfc2c6"></div>
<div class="a" style="left:490px;top:429px;width:539px;height:1px;background:#bfc2c6"></div>
<div class="a" style="left:1px;top:448px;width:1028px;height:1px;background:#bfc2c6"></div>
<div class="a" style="left:1px;top:409px;width:1px;height:40px;background:#bfc2c6"></div>
<div class="a" style="left:82px;top:409px;width:1px;height:40px;background:#bfc2c6"></div>
<div class="a" style="left:161px;top:409px;width:1px;height:40px;background:#bfc2c6"></div>
<div class="a" style="left:239px;top:409px;width:1px;height:40px;background:#bfc2c6"></div>
<div class="a" style="left:333px;top:409px;width:1px;height:40px;background:#bfc2c6"></div>
<div class="a" style="left:374px;top:409px;width:1px;height:40px;background:#bfc2c6"></div>
<div class="a" style="left:490px;top:409px;width:1px;height:40px;background:#bfc2c6"></div>
<div class="a" style="left:540px;top:429px;width:1px;height:20px;background:#bfc2c6"></div>
<div class="a" style="left:627px;top:429px;width:1px;height:20px;background:#bfc2c6"></div>
<div class="a" style="left:681px;top:409px;width:1px;height:40px;background:#bfc2c6"></div>
<div class="a" style="left:749px;top:429px;width:1px;height:20px;background:#bfc2c6"></div>
<div class="a" style="left:818px;top:429px;width:1px;height:20px;background:#bfc2c6"></div>
<div class="a" style="left:888px;top:409px;width:1px;height:40px;background:#bfc2c6"></div>
<div class="a" style="left:928px;top:429px;width:1px;height:20px;background:#bfc2c6"></div>
<div class="a" style="left:968px;top:429px;width:1px;height:20px;background:#bfc2c6"></div>
<div class="a" style="left:1028px;top:409px;width:1px;height:40px;background:#bfc2c6"></div>
<div class="a t" style="left:1.5px;top:411px;width:80px;height:38px;line-height:38px;color:#383838">类型</div>
<div class="a t" style="left:82.5px;top:411px;width:78px;height:38px;line-height:38px;color:#383838">日期</div>
<div class="a t" style="left:161.5px;top:411px;width:77px;height:38px;line-height:38px;color:#383838">主场</div>
<div class="a t" style="left:239.5px;top:411px;width:93px;height:38px;line-height:38px;color:#383838">比分(半场)</div>
<div class="a t" style="left:333.5px;top:411px;width:40px;height:38px;line-height:38px;color:#383838">角球</div>
<div class="a t" style="left:374.5px;top:411px;width:115px;height:38px;line-height:38px;color:#383838">客场</div>
<div class="a t" style="left:490.5px;top:431px;width:49px;height:18px;line-height:18px;color:#383838">主</div>
<div class="a t" style="left:540.5px;top:431px;width:86px;height:18px;line-height:18px;color:#383838">让球</div>
<div class="a t" style="left:627.5px;top:431px;width:53px;height:18px;line-height:18px;color:#383838">客</div>
<div class="a t" style="left:681.5px;top:431px;width:67px;height:18px;line-height:18px;color:#383838">主</div>
<div class="a t" style="left:749.5px;top:431px;width:68px;height:18px;line-height:18px;color:#383838">和</div>
<div class="a t" style="left:818.5px;top:431px;width:69px;height:18px;line-height:18px;color:#383838">客</div>
<div class="a t" style="left:888.5px;top:431px;width:39px;height:18px;line-height:18px;color:#383838">胜负</div>
<div class="a t" style="left:928.5px;top:431px;width:39px;height:18px;line-height:18px;color:#383838">让球</div>
<div class="a t" style="left:968.5px;top:431px;width:59px;height:18px;line-height:18px;color:#383838">进球数</div>
<div class="a" style="left:526px;top:410px;width:59px;height:17px;background:#fff;border:1px solid #767676;border-radius:2px"></div>
<div class="a" style="left:531px;top:410px;height:19px;line-height:19px;font-size:13px;color:#000;">Crow*</div>
<svg class="a" style="left:572px;top:416px" width="10" height="6" viewBox="0 0 10 6"><path d="M1 1 L5.0 5 L9 1" fill="none" stroke="#000" stroke-width="2" stroke-linecap="square"/></svg>
<div class="a" style="left:594px;top:410px;width:49px;height:17px;background:#fff;border:1px solid #767676;border-radius:2px"></div>
<div class="a" style="left:599px;top:410px;height:19px;line-height:19px;font-size:13px;color:#000;">终指</div>
<svg class="a" style="left:630px;top:416px" width="10" height="6" viewBox="0 0 10 6"><path d="M1 1 L5.0 5 L9 1" fill="none" stroke="#000" stroke-width="2" stroke-linecap="square"/></svg>
<div class="a" style="left:720px;top:410px;width:68px;height:17px;background:#fff;border:1px solid #767676;border-radius:2px"></div>
<div class="a" style="left:725px;top:410px;height:19px;line-height:19px;font-size:13px;color:#000;">平均值</div>
<svg class="a" style="left:775px;top:416px" width="10" height="6" viewBox="0 0 10 6"><path d="M1 1 L5.0 5 L9 1" fill="none" stroke="#000" stroke-width="2" stroke-linecap="square"/></svg>
<div class="a" style="left:798px;top:410px;width:49px;height:17px;background:#fff;border:1px solid #767676;border-radius:2px"></div>
<div class="a" style="left:803px;top:410px;height:19px;line-height:19px;font-size:13px;color:#000;">终指</div>
<svg class="a" style="left:834px;top:416px" width="10" height="6" viewBox="0 0 10 6"><path d="M1 1 L5.0 5 L9 1" fill="none" stroke="#000" stroke-width="2" stroke-linecap="square"/></svg>
<div class="a" style="left:933px;top:410px;width:49px;height:17px;background:#fff;border:1px solid #767676;border-radius:2px"></div>
<div class="a" style="left:938px;top:410px;height:19px;line-height:19px;font-size:13px;color:#000;">全场</div>
<svg class="a" style="left:969px;top:416px" width="10" height="6" viewBox="0 0 10 6"><path d="M1 1 L5.0 5 L9 1" fill="none" stroke="#000" stroke-width="2" stroke-linecap="square"/></svg>
<div class="a" style="left:2px;top:449px;width:80px;height:25px;background:#cc3300"></div>
<div class="a" style="left:83px;top:449px;width:78px;height:25px;background:#ffffff"></div>
<div class="a" style="left:162px;top:449px;width:77px;height:25px;background:#ffffff"></div>
<div class="a" style="left:240px;top:449px;width:93px;height:25px;background:#ffffff"></div>
<div class="a" style="left:334px;top:449px;width:40px;height:25px;background:#ffffff"></div>
<div class="a" style="left:375px;top:449px;width:115px;height:25px;background:#ffffff"></div>
<div class="a" style="left:491px;top:449px;width:49px;height:25px;background:#fdf9f6"></div>
<div class="a" style="left:541px;top:449px;width:86px;height:25px;background:#fdf9f6"></div>
<div class="a" style="left:628px;top:449px;width:53px;height:25px;background:#fdf9f6"></div>
<div class="a" style="left:682px;top:449px;width:67px;height:25px;background:#eff7fb"></div>
<div class="a" style="left:750px;top:449px;width:68px;height:25px;background:#eff7fb"></div>
<div class="a" style="left:819px;top:449px;width:69px;height:25px;background:#eff7fb"></div>
<div class="a" style="left:889px;top:449px;width:39px;height:25px;background:#ffffff"></div>
<div class="a" style="left:929px;top:449px;width:39px;height:25px;background:#ffffff"></div>
<div class="a" style="left:969px;top:449px;width:59px;height:25px;background:#ffffff"></div>
<div class="a" style="left:1px;top:474px;width:1028px;height:1px;background:#bfc2c6"></div>
<div class="a" style="left:1px;top:448px;width:1px;height:27px;background:#bfc2c6"></div>
<div class="a" style="left:82px;top:448px;width:1px;height:27px;background:#bfc2c6"></div>
<div class="a" style="left:161px;top:448px;width:1px;height:27px;background:#bfc2c6"></div>
<div class="a" style="left:239px;top:448px;width:1px;height:27px;background:#bfc2c6"></div>
<div class="a" style="left:333px;top:448px;width:1px;height:27px;background:#bfc2c6"></div>
<div class="a" style="left:374px;top:448px;width:1px;height:27px;background:#bfc2c6"></div>
<div class="a" style="left:490px;top:448px;width:1px;height:27px;background:#bfc2c6"></div>
<div class="a" style="left:540px;top:448px;width:1px;height:27px;background:#bfc2c6"></div>
<div class="a" style="left:627px;top:448px;width:1px;height:27px;background:#bfc2c6"></div>
<div class="a" style="left:681px;top:448px;width:1px;height:27px;background:#bfc2c6"></div>
<div class="a" style="left:749px;top:448px;width:1px;height:27px;background:#bfc2c6"></div>
<div class="a" style="left:818px;top:448px;width:1px;height:27px;background:#bfc2c6"></div>
<div class="a" style="left:888px;top:448px;width:1px;height:27px;background:#bfc2c6"></div>
<div class="a" style="left:928px;top:448px;width:1px;height:27px;background:#bfc2c6"></div>
<div class="a" style="left:968px;top:448px;width:1px;height:27px;background:#bfc2c6"></div>
<div class="a" style="left:1028px;top:448px;width:1px;height:27px;background:#bfc2c6"></div>
<div class="a" style="left:2px;top:449px;width:80px;height:25px;background:#cc3300"></div>
<div class="a" style="left:2px;top:474px;width:80px;height:1px;background:#f2a081"></div>
<div class="a t" style="left:1.5px;top:449.5px;width:80px;height:25px;line-height:25px;color:#fff">英冠</div>
<div class="a t" style="left:82.5px;top:449.5px;width:78px;height:25px;line-height:25px;">25-04-05</div>
<div class="a t" style="left:161.5px;top:449.5px;width:77px;height:25px;line-height:25px;color:#1f7a1f">卢顿</div>
<div class="a t" style="left:239.5px;top:449.5px;width:93px;height:25px;line-height:25px;"><span style="color:#c8141e">1-1</span>(1-1)</div>
<div class="a t" style="left:333.5px;top:449.5px;width:40px;height:25px;line-height:25px;">0-5</div>
<div class="a t" style="left:374.5px;top:449.5px;width:115px;height:25px;line-height:25px;">利兹联</div>
<div class="a t" style="left:490.5px;top:449.5px;width:49px;height:25px;line-height:25px;">1.04</div>
<div class="a t" style="left:540.5px;top:449.5px;width:86px;height:25px;line-height:25px;">受半/一</div>
<div class="a t" style="left:627.5px;top:449.5px;width:53px;height:25px;line-height:25px;">0.85</div>
<div class="a t" style="left:681.5px;top:449.5px;width:67px;height:25px;line-height:25px;">5.48</div>
<div class="a t" style="left:749.5px;top:449.5px;width:68px;height:25px;line-height:25px;">3.97</div>
<div class="a t" style="left:818.5px;top:449.5px;width:69px;height:25px;line-height:25px;">1.58</div>
<div class="a t" style="left:888.5px;top:449.5px;width:39px;height:25px;line-height:25px;color:#1f7a1f">平</div>
<div class="a t" style="left:928.5px;top:449.5px;width:39px;height:25px;line-height:25px;color:#dd0a0a">赢</div>
<div class="a t" style="left:968.5px;top:449.5px;width:59px;height:25px;line-height:25px;color:#1111b0">小</div>
<div class="a" style="left:2px;top:475px;width:80px;height:25px;background:#cc3300"></div>
<div class="a" style="left:83px;top:475px;width:78px;height:25px;background:#f0f0f0"></div>
<div class="a" style="left:162px;top:475px;width:77px;height:25px;background:#f0f0f0"></div>
<div class="a" style="left:240px;top:475px;width:93px;height:25px;background:#f0f0f0"></div>
<div class="a" style="left:334px;top:475px;width:40px;height:25px;background:#f0f0f0"></div>
<div class="a" style="left:375px;top:475px;width:115px;height:25px;background:#f0f0f0"></div>
<div class="a" style="left:491px;top:475px;width:49px;height:25px;background:#fdf9f6"></div>
<div class="a" style="left:541px;top:475px;width:86px;height:25px;background:#fdf9f6"></div>
<div class="a" style="left:628px;top:475px;width:53px;height:25px;background:#fdf9f6"></div>
<div class="a" style="left:682px;top:475px;width:67px;height:25px;background:#eff7fb"></div>
<div class="a" style="left:750px;top:475px;width:68px;height:25px;background:#eff7fb"></div>
<div class="a" style="left:819px;top:475px;width:69px;height:25px;background:#eff7fb"></div>
<div class="a" style="left:889px;top:475px;width:39px;height:25px;background:#f0f0f0"></div>
<div class="a" style="left:929px;top:475px;width:39px;height:25px;background:#f0f0f0"></div>
<div class="a" style="left:969px;top:475px;width:59px;height:25px;background:#f0f0f0"></div>
<div class="a" style="left:1px;top:500px;width:1028px;height:1px;background:#bfc2c6"></div>
<div class="a" style="left:1px;top:474px;width:1px;height:27px;background:#bfc2c6"></div>
<div class="a" style="left:82px;top:474px;width:1px;height:27px;background:#bfc2c6"></div>
<div class="a" style="left:161px;top:474px;width:1px;height:27px;background:#bfc2c6"></div>
<div class="a" style="left:239px;top:474px;width:1px;height:27px;background:#bfc2c6"></div>
<div class="a" style="left:333px;top:474px;width:1px;height:27px;background:#bfc2c6"></div>
<div class="a" style="left:374px;top:474px;width:1px;height:27px;background:#bfc2c6"></div>
<div class="a" style="left:490px;top:474px;width:1px;height:27px;background:#bfc2c6"></div>
<div class="a" style="left:540px;top:474px;width:1px;height:27px;background:#bfc2c6"></div>
<div class="a" style="left:627px;top:474px;width:1px;height:27px;background:#bfc2c6"></div>
<div class="a" style="left:681px;top:474px;width:1px;height:27px;background:#bfc2c6"></div>
<div class="a" style="left:749px;top:474px;width:1px;height:27px;background:#bfc2c6"></div>
<div class="a" style="left:818px;top:474px;width:1px;height:27px;background:#bfc2c6"></div>
<div class="a" style="left:888px;top:474px;width:1px;height:27px;background:#bfc2c6"></div>
<div class="a" style="left:928px;top:474px;width:1px;height:27px;background:#bfc2c6"></div>
<div class="a" style="left:968px;top:474px;width:1px;height:27px;background:#bfc2c6"></div>
<div class="a" style="left:1028px;top:474px;width:1px;height:27px;background:#bfc2c6"></div>
<div class="a" style="left:2px;top:475px;width:80px;height:25px;background:#cc3300"></div>
<div class="a" style="left:2px;top:500px;width:80px;height:1px;background:#f2a081"></div>
<div class="a t" style="left:1.5px;top:475.5px;width:80px;height:25px;line-height:25px;color:#fff">英冠</div>
<div class="a t" style="left:82.5px;top:475.5px;width:78px;height:25px;line-height:25px;">25-03-29</div>
<div class="a t" style="left:161.5px;top:475.5px;width:77px;height:25px;line-height:25px;">赫尔城</div>
<div class="a t" style="left:239.5px;top:475.5px;width:93px;height:25px;line-height:25px;"><span style="color:#c8141e">0-1</span>(0-0)</div>
<div class="a t" style="left:333.5px;top:475.5px;width:40px;height:25px;line-height:25px;">10-4</div>
<div class="a t" style="left:374.5px;top:475.5px;width:115px;height:25px;line-height:25px;color:#1f7a1f">卢顿</div>
<div class="a t" style="left:490.5px;top:475.5px;width:49px;height:25px;line-height:25px;">1.04</div>
<div class="a t" style="left:540.5px;top:475.5px;width:86px;height:25px;line-height:25px;">平/半</div>
<div class="a t" style="left:627.5px;top:475.5px;width:53px;height:25px;line-height:25px;">0.85</div>
<div class="a t" style="left:681.5px;top:475.5px;width:67px;height:25px;line-height:25px;">2.26</div>
<div class="a t" style="left:749.5px;top:475.5px;width:68px;height:25px;line-height:25px;">3.23</div>
<div class="a t" style="left:818.5px;top:475.5px;width:69px;height:25px;line-height:25px;">3.18</div>
<div class="a t" style="left:888.5px;top:475.5px;width:39px;height:25px;line-height:25px;color:#dd0a0a">胜</div>
<div class="a t" style="left:928.5px;top:475.5px;width:39px;height:25px;line-height:25px;color:#dd0a0a">赢</div>
<div class="a t" style="left:968.5px;top:475.5px;width:59px;height:25px;line-height:25px;color:#1111b0">小</div>
<div class="a" style="left:2px;top:501px;width:80px;height:25px;background:#cc3300"></div>
<div class="a" style="left:83px;top:501px;width:78px;height:25px;background:#ffffff"></div>
<div class="a" style="left:162px;top:501px;width:77px;height:25px;background:#ffffff"></div>
<div class="a" style="left:240px;top:501px;width:93px;height:25px;background:#ffffff"></div>
<div class="a" style="left:334px;top:501px;width:40px;height:25px;background:#ffffff"></div>
<div class="a" style="left:375px;top:501px;width:115px;height:25px;background:#ffffff"></div>
<div class="a" style="left:491px;top:501px;width:49px;height:25px;background:#fdf9f6"></div>
<div class="a" style="left:541px;top:501px;width:86px;height:25px;background:#fdf9f6"></div>
<div class="a" style="left:628px;top:501px;width:53px;height:25px;background:#fdf9f6"></div>
<div class="a" style="left:682px;top:501px;width:67px;height:25px;background:#eff7fb"></div>
<div class="a" style="left:750px;top:501px;width:68px;height:25px;background:#eff7fb"></div>
<div class="a" style="left:819px;top:501px;width:69px;height:25px;background:#eff7fb"></div>
<div class="a" style="left:889px;top:501px;width:39px;height:25px;background:#ffffff"></div>
<div class="a" style="left:929px;top:501px;width:39px;height:25px;background:#ffffff"></div>
<div class="a" style="left:969px;top:501px;width:59px;height:25px;background:#ffffff"></div>
<div class="a" style="left:1px;top:526px;width:1028px;height:1px;background:#bfc2c6"></div>
<div class="a" style="left:1px;top:500px;width:1px;height:27px;background:#bfc2c6"></div>
<div class="a" style="left:82px;top:500px;width:1px;height:27px;background:#bfc2c6"></div>
<div class="a" style="left:161px;top:500px;width:1px;height:27px;background:#bfc2c6"></div>
<div class="a" style="left:239px;top:500px;width:1px;height:27px;background:#bfc2c6"></div>
<div class="a" style="left:333px;top:500px;width:1px;height:27px;background:#bfc2c6"></div>
<div class="a" style="left:374px;top:500px;width:1px;height:27px;background:#bfc2c6"></div>
<div class="a" style="left:490px;top:500px;width:1px;height:27px;background:#bfc2c6"></div>
<div class="a" style="left:540px;top:500px;width:1px;height:27px;background:#bfc2c6"></div>
<div class="a" style="left:627px;top:500px;width:1px;height:27px;background:#bfc2c6"></div>
<div class="a" style="left:681px;top:500px;width:1px;height:27px;background:#bfc2c6"></div>
<div class="a" style="left:749px;top:500px;width:1px;height:27px;background:#bfc2c6"></div>
<div class="a" style="left:818px;top:500px;width:1px;height:27px;background:#bfc2c6"></div>
<div class="a" style="left:888px;top:500px;width:1px;height:27px;background:#bfc2c6"></div>
<div class="a" style="left:928px;top:500px;width:1px;height:27px;background:#bfc2c6"></div>
<div class="a" style="left:968px;top:500px;width:1px;height:27px;background:#bfc2c6"></div>
<div class="a" style="left:1028px;top:500px;width:1px;height:27px;background:#bfc2c6"></div>
<div class="a" style="left:2px;top:501px;width:80px;height:25px;background:#cc3300"></div>
<div class="a" style="left:2px;top:526px;width:80px;height:1px;background:#f2a081"></div>
<div class="a t" style="left:1.5px;top:501.5px;width:80px;height:25px;line-height:25px;color:#fff">英冠</div>
<div class="a t" style="left:82.5px;top:501.5px;width:78px;height:25px;line-height:25px;">25-03-15</div>
<div class="a t" style="left:161.5px;top:501.5px;width:77px;height:25px;line-height:25px;color:#1f7a1f">卢顿</div>
<div class="a t" style="left:239.5px;top:501.5px;width:93px;height:25px;line-height:25px;"><span style="color:#c8141e">0-0</span>(0-0)</div>
<div class="a t" style="left:333.5px;top:501.5px;width:40px;height:25px;line-height:25px;">9-3</div>
<div class="a t" style="left:374.5px;top:501.5px;width:115px;height:25px;line-height:25px;">米德尔斯堡</div>
<div class="a t" style="left:490.5px;top:501.5px;width:49px;height:25px;line-height:25px;">0.99</div>
<div class="a t" style="left:540.5px;top:501.5px;width:86px;height:25px;line-height:25px;">平手</div>
<div class="a t" style="left:627.5px;top:501.5px;width:53px;height:25px;line-height:25px;">0.90</div>
<div class="a t" style="left:681.5px;top:501.5px;width:67px;height:25px;line-height:25px;">2.63</div>
<div class="a t" style="left:749.5px;top:501.5px;width:68px;height:25px;line-height:25px;">3.35</div>
<div class="a t" style="left:818.5px;top:501.5px;width:69px;height:25px;line-height:25px;">2.58</div>
<div class="a t" style="left:888.5px;top:501.5px;width:39px;height:25px;line-height:25px;color:#1f7a1f">平</div>
<div class="a t" style="left:928.5px;top:501.5px;width:39px;height:25px;line-height:25px;color:#1f7a1f">走</div>
<div class="a t" style="left:968.5px;top:501.5px;width:59px;height:25px;line-height:25px;color:#1111b0">小</div>
<div class="a" style="left:2px;top:527px;width:80px;height:25px;background:#cc3300"></div>
<div class="a" style="left:83px;top:527px;width:78px;height:25px;background:#f0f0f0"></div>
<div class="a" style="left:162px;top:527px;width:77px;height:25px;background:#f0f0f0"></div>
<div class="a" style="left:240px;top:527px;width:93px;height:25px;background:#f0f0f0"></div>
<div class="a" style="left:334px;top:527px;width:40px;height:25px;background:#f0f0f0"></div>
<div class="a" style="left:375px;top:527px;width:115px;height:25px;background:#f0f0f0"></div>
<div class="a" style="left:491px;top:527px;width:49px;height:25px;background:#fdf9f6"></div>
<div class="a" style="left:541px;top:527px;width:86px;height:25px;background:#fdf9f6"></div>
<div class="a" style="left:628px;top:527px;width:53px;height:25px;background:#fdf9f6"></div>
<div class="a" style="left:682px;top:527px;width:67px;height:25px;background:#eff7fb"></div>
<div class="a" style="left:750px;top:527px;width:68px;height:25px;background:#eff7fb"></div>
<div class="a" style="left:819px;top:527px;width:69px;height:25px;background:#eff7fb"></div>
<div class="a" style="left:889px;top:527px;width:39px;height:25px;background:#f0f0f0"></div>
<div class="a" style="left:929px;top:527px;width:39px;height:25px;background:#f0f0f0"></div>
<div class="a" style="left:969px;top:527px;width:59px;height:25px;background:#f0f0f0"></div>
<div class="a" style="left:1px;top:552px;width:1028px;height:1px;background:#bfc2c6"></div>
<div class="a" style="left:1px;top:526px;width:1px;height:27px;background:#bfc2c6"></div>
<div class="a" style="left:82px;top:526px;width:1px;height:27px;background:#bfc2c6"></div>
<div class="a" style="left:161px;top:526px;width:1px;height:27px;background:#bfc2c6"></div>
<div class="a" style="left:239px;top:526px;width:1px;height:27px;background:#bfc2c6"></div>
<div class="a" style="left:333px;top:526px;width:1px;height:27px;background:#bfc2c6"></div>
<div class="a" style="left:374px;top:526px;width:1px;height:27px;background:#bfc2c6"></div>
<div class="a" style="left:490px;top:526px;width:1px;height:27px;background:#bfc2c6"></div>
<div class="a" style="left:540px;top:526px;width:1px;height:27px;background:#bfc2c6"></div>
<div class="a" style="left:627px;top:526px;width:1px;height:27px;background:#bfc2c6"></div>
<div class="a" style="left:681px;top:526px;width:1px;height:27px;background:#bfc2c6"></div>
<div class="a" style="left:749px;top:526px;width:1px;height:27px;background:#bfc2c6"></div>
<div class="a" style="left:818px;top:526px;width:1px;height:27px;background:#bfc2c6"></div>
<div class="a" style="left:888px;top:526px;width:1px;height:27px;background:#bfc2c6"></div>
<div class="a" style="left:928px;top:526px;width:1px;height:27px;background:#bfc2c6"></div>
<div class="a" style="left:968px;top:526px;width:1px;height:27px;background:#bfc2c6"></div>
<div class="a" style="left:1028px;top:526px;width:1px;height:27px;background:#bfc2c6"></div>
<div class="a" style="left:2px;top:527px;width:80px;height:25px;background:#cc3300"></div>
<div class="a" style="left:2px;top:552px;width:80px;height:1px;background:#f2a081"></div>
<div class="a t" style="left:1.5px;top:527.5px;width:80px;height:25px;line-height:25px;color:#fff">英冠</div>
<div class="a t" style="left:82.5px;top:527.5px;width:78px;height:25px;line-height:25px;">25-03-12</div>
<div class="a t" style="left:161.5px;top:527.5px;width:77px;height:25px;line-height:25px;">卡迪夫城</div>
<div class="a t" style="left:239.5px;top:527.5px;width:93px;height:25px;line-height:25px;"><span style="color:#c8141e">1-2</span>(0-0)</div>
<div class="a t" style="left:333.5px;top:527.5px;width:40px;height:25px;line-height:25px;">4-3</div>
<div class="a t" style="left:374.5px;top:527.5px;width:115px;height:25px;line-height:25px;color:#1f7a1f">卢顿</div>
<div class="a t" style="left:490.5px;top:527.5px;width:49px;height:25px;line-height:25px;">1.06</div>
<div class="a t" style="left:540.5px;top:527.5px;width:86px;height:25px;line-height:25px;">平/半</div>
<div class="a t" style="left:627.5px;top:527.5px;width:53px;height:25px;line-height:25px;">0.83</div>
<div class="a t" style="left:681.5px;top:527.5px;width:67px;height:25px;line-height:25px;">2.33</div>
<div class="a t" style="left:749.5px;top:527.5px;width:68px;height:25px;line-height:25px;">3.14</div>
<div class="a t" style="left:818.5px;top:527.5px;width:69px;height:25px;line-height:25px;">3.14</div>
<div class="a t" style="left:888.5px;top:527.5px;width:39px;height:25px;line-height:25px;color:#dd0a0a">胜</div>
<div class="a t" style="left:928.5px;top:527.5px;width:39px;height:25px;line-height:25px;color:#dd0a0a">赢</div>
<div class="a t" style="left:968.5px;top:527.5px;width:59px;height:25px;line-height:25px;color:#dd0a0a">大</div>
<div class="a" style="left:2px;top:553px;width:80px;height:25px;background:#cc3300"></div>
<div class="a" style="left:83px;top:553px;width:78px;height:25px;background:#ffffff"></div>
<div class="a" style="left:162px;top:553px;width:77px;height:25px;background:#ffffff"></div>
<div class="a" style="left:240px;top:553px;width:93px;height:25px;background:#ffffff"></div>
<div class="a" style="left:334px;top:553px;width:40px;height:25px;background:#ffffff"></div>
<div class="a" style="left:375px;top:553px;width:115px;height:25px;background:#ffffff"></div>
<div class="a" style="left:491px;top:553px;width:49px;height:25px;background:#fdf9f6"></div>
<div class="a" style="left:541px;top:553px;width:86px;height:25px;background:#fdf9f6"></div>
<div class="a" style="left:628px;top:553px;width:53px;height:25px;background:#fdf9f6"></div>
<div class="a" style="left:682px;top:553px;width:67px;height:25px;background:#eff7fb"></div>
<div class="a" style="left:750px;top:553px;width:68px;height:25px;background:#eff7fb"></div>
<div class="a" style="left:819px;top:553px;width:69px;height:25px;background:#eff7fb"></div>
<div class="a" style="left:889px;top:553px;width:39px;height:25px;background:#ffffff"></div>
<div class="a" style="left:929px;top:553px;width:39px;height:25px;background:#ffffff"></div>
<div class="a" style="left:969px;top:553px;width:59px;height:25px;background:#ffffff"></div>
<div class="a" style="left:1px;top:578px;width:1028px;height:1px;background:#bfc2c6"></div>
<div class="a" style="left:1px;top:552px;width:1px;height:27px;background:#bfc2c6"></div>
<div class="a" style="left:82px;top:552px;width:1px;height:27px;background:#bfc2c6"></div>
<div class="a" style="left:161px;top:552px;width:1px;height:27px;background:#bfc2c6"></div>
<div class="a" style="left:239px;top:552px;width:1px;height:27px;background:#bfc2c6"></div>
<div class="a" style="left:333px;top:552px;width:1px;height:27px;background:#bfc2c6"></div>
<div class="a" style="left:374px;top:552px;width:1px;height:27px;background:#bfc2c6"></div>
<div class="a" style="left:490px;top:552px;width:1px;height:27px;background:#bfc2c6"></div>
<div class="a" style="left:540px;top:552px;width:1px;height:27px;background:#bfc2c6"></div>
<div class="a" style="left:627px;top:552px;width:1px;height:27px;background:#bfc2c6"></div>
<div class="a" style="left:681px;top:552px;width:1px;height:27px;background:#bfc2c6"></div>
<div class="a" style="left:749px;top:552px;width:1px;height:27px;background:#bfc2c6"></div>
<div class="a" style="left:818px;top:552px;width:1px;height:27px;background:#bfc2c6"></div>
<div class="a" style="left:888px;top:552px;width:1px;height:27px;background:#bfc2c6"></div>
<div class="a" style="left:928px;top:552px;width:1px;height:27px;background:#bfc2c6"></div>
<div class="a" style="left:968px;top:552px;width:1px;height:27px;background:#bfc2c6"></div>
<div class="a" style="left:1028px;top:552px;width:1px;height:27px;background:#bfc2c6"></div>
<div class="a" style="left:2px;top:553px;width:80px;height:25px;background:#cc3300"></div>
<div class="a" style="left:2px;top:578px;width:80px;height:1px;background:#f2a081"></div>
<div class="a t" style="left:1.5px;top:553.5px;width:80px;height:25px;line-height:25px;color:#fff">英冠</div>
<div class="a t" style="left:82.5px;top:553.5px;width:78px;height:25px;line-height:25px;">25-03-08</div>
<div class="a t" style="left:161.5px;top:553.5px;width:77px;height:25px;line-height:25px;">伯恩利</div>
<div class="a t" style="left:239.5px;top:553.5px;width:93px;height:25px;line-height:25px;"><span style="color:#c8141e">4-0</span>(2-0)</div>
<div class="a t" style="left:333.5px;top:553.5px;width:40px;height:25px;line-height:25px;">6-4</div>
<div class="a t" style="left:374.5px;top:553.5px;width:115px;height:25px;line-height:25px;color:#1f7a1f">卢顿<span style="display:inline-block;background:#e60000;color:#fff;width:8px;height:15px;line-height:15px;vertical-align:middle;position:relative;top:-1px;font-size:12px;font-weight:bold;text-align:center">1</span></div>
<div class="a t" style="left:490.5px;top:553.5px;width:49px;height:25px;line-height:25px;">0.77</div>
<div class="a t" style="left:540.5px;top:553.5px;width:86px;height:25px;line-height:25px;">半/一</div>
<div class="a t" style="left:627.5px;top:553.5px;width:53px;height:25px;line-height:25px;">1.13</div>
<div class="a t" style="left:681.5px;top:553.5px;width:67px;height:25px;line-height:25px;">1.61</div>
<div class="a t" style="left:749.5px;top:553.5px;width:68px;height:25px;line-height:25px;">3.56</div>
<div class="a t" style="left:818.5px;top:553.5px;width:69px;height:25px;line-height:25px;">6.05</div>
<div class="a t" style="left:888.5px;top:553.5px;width:39px;height:25px;line-height:25px;color:#1111b0">负</div>
<div class="a t" style="left:928.5px;top:553.5px;width:39px;height:25px;line-height:25px;color:#1111b0">输</div>
<div class="a t" style="left:968.5px;top:553.5px;width:59px;height:25px;line-height:25px;color:#dd0a0a">大</div>
<div class="a" style="left:2px;top:579px;width:80px;height:25px;background:#cc3300"></div>
<div class="a" style="left:83px;top:579px;width:78px;height:25px;background:#f0f0f0"></div>
<div class="a" style="left:162px;top:579px;width:77px;height:25px;background:#f0f0f0"></div>
<div class="a" style="left:240px;top:579px;width:93px;height:25px;background:#f0f0f0"></div>
<div class="a" style="left:334px;top:579px;width:40px;height:25px;background:#f0f0f0"></div>
<div class="a" style="left:375px;top:579px;width:115px;height:25px;background:#f0f0f0"></div>
<div class="a" style="left:491px;top:579px;width:49px;height:25px;background:#fdf9f6"></div>
<div class="a" style="left:541px;top:579px;width:86px;height:25px;background:#fdf9f6"></div>
<div class="a" style="left:628px;top:579px;width:53px;height:25px;background:#fdf9f6"></div>
<div class="a" style="left:682px;top:579px;width:67px;height:25px;background:#eff7fb"></div>
<div class="a" style="left:750px;top:579px;width:68px;height:25px;background:#eff7fb"></div>
<div class="a" style="left:819px;top:579px;width:69px;height:25px;background:#eff7fb"></div>
<div class="a" style="left:889px;top:579px;width:39px;height:25px;background:#f0f0f0"></div>
<div class="a" style="left:929px;top:579px;width:39px;height:25px;background:#f0f0f0"></div>
<div class="a" style="left:969px;top:579px;width:59px;height:25px;background:#f0f0f0"></div>
<div class="a" style="left:1px;top:604px;width:1028px;height:1px;background:#bfc2c6"></div>
<div class="a" style="left:1px;top:578px;width:1px;height:27px;background:#bfc2c6"></div>
<div class="a" style="left:82px;top:578px;width:1px;height:27px;background:#bfc2c6"></div>
<div class="a" style="left:161px;top:578px;width:1px;height:27px;background:#bfc2c6"></div>
<div class="a" style="left:239px;top:578px;width:1px;height:27px;background:#bfc2c6"></div>
<div class="a" style="left:333px;top:578px;width:1px;height:27px;background:#bfc2c6"></div>
<div class="a" style="left:374px;top:578px;width:1px;height:27px;background:#bfc2c6"></div>
<div class="a" style="left:490px;top:578px;width:1px;height:27px;background:#bfc2c6"></div>
<div class="a" style="left:540px;top:578px;width:1px;height:27px;background:#bfc2c6"></div>
<div class="a" style="left:627px;top:578px;width:1px;height:27px;background:#bfc2c6"></div>
<div class="a" style="left:681px;top:578px;width:1px;height:27px;background:#bfc2c6"></div>
<div class="a" style="left:749px;top:578px;width:1px;height:27px;background:#bfc2c6"></div>
<div class="a" style="left:818px;top:578px;width:1px;height:27px;background:#bfc2c6"></div>
<div class="a" style="left:888px;top:578px;width:1px;height:27px;background:#bfc2c6"></div>
<div class="a" style="left:928px;top:578px;width:1px;height:27px;background:#bfc2c6"></div>
<div class="a" style="left:968px;top:578px;width:1px;height:27px;background:#bfc2c6"></div>
<div class="a" style="left:1028px;top:578px;width:1px;height:27px;background:#bfc2c6"></div>
<div class="a" style="left:2px;top:579px;width:80px;height:25px;background:#cc3300"></div>
<div class="a" style="left:2px;top:604px;width:80px;height:1px;background:#f2a081"></div>
<div class="a t" style="left:1.5px;top:579.5px;width:80px;height:25px;line-height:25px;color:#fff">英冠</div>
<div class="a t" style="left:82.5px;top:579.5px;width:78px;height:25px;line-height:25px;">25-03-01</div>
<div class="a t" style="left:161.5px;top:579.5px;width:77px;height:25px;line-height:25px;color:#1f7a1f">卢顿</div>
<div class="a t" style="left:239.5px;top:579.5px;width:93px;height:25px;line-height:25px;"><span style="color:#c8141e">1-0</span>(1-0)</div>
<div class="a t" style="left:333.5px;top:579.5px;width:40px;height:25px;line-height:25px;">2-7</div>
<div class="a t" style="left:374.5px;top:579.5px;width:115px;height:25px;line-height:25px;">朴茨茅斯</div>
<div class="a t" style="left:490.5px;top:579.5px;width:49px;height:25px;line-height:25px;">1.03</div>
<div class="a t" style="left:540.5px;top:579.5px;width:86px;height:25px;line-height:25px;">半球</div>
<div class="a t" style="left:627.5px;top:579.5px;width:53px;height:25px;line-height:25px;">0.86</div>
<div class="a t" style="left:681.5px;top:579.5px;width:67px;height:25px;line-height:25px;">2.09</div>
<div class="a t" style="left:749.5px;top:579.5px;width:68px;height:25px;line-height:25px;">3.31</div>
<div class="a t" style="left:818.5px;top:579.5px;width:69px;height:25px;line-height:25px;">3.49</div>
<div class="a t" style="left:888.5px;top:579.5px;width:39px;height:25px;line-height:25px;color:#dd0a0a">胜</div>
<div class="a t" style="left:928.5px;top:579.5px;width:39px;height:25px;line-height:25px;color:#dd0a0a">赢</div>
<div class="a t" style="left:968.5px;top:579.5px;width:59px;height:25px;line-height:25px;color:#1111b0">小</div>
<div class="a" style="left:2px;top:605px;width:80px;height:25px;background:#cc3300"></div>
<div class="a" style="left:83px;top:605px;width:78px;height:25px;background:#ffffff"></div>
<div class="a" style="left:162px;top:605px;width:77px;height:25px;background:#ffffff"></div>
<div class="a" style="left:240px;top:605px;width:93px;height:25px;background:#ffffff"></div>
<div class="a" style="left:334px;top:605px;width:40px;height:25px;background:#ffffff"></div>
<div class="a" style="left:375px;top:605px;width:115px;height:25px;background:#ffffff"></div>
<div class="a" style="left:491px;top:605px;width:49px;height:25px;background:#fdf9f6"></div>
<div class="a" style="left:541px;top:605px;width:86px;height:25px;background:#fdf9f6"></div>
<div class="a" style="left:628px;top:605px;width:53px;height:25px;background:#fdf9f6"></div>
<div class="a" style="left:682px;top:605px;width:67px;height:25px;background:#eff7fb"></div>
<div class="a" style="left:750px;top:605px;width:68px;height:25px;background:#eff7fb"></div>
<div class="a" style="left:819px;top:605px;width:69px;height:25px;background:#eff7fb"></div>
<div class="a" style="left:889px;top:605px;width:39px;height:25px;background:#ffffff"></div>
<div class="a" style="left:929px;top:605px;width:39px;height:25px;background:#ffffff"></div>
<div class="a" style="left:969px;top:605px;width:59px;height:25px;background:#ffffff"></div>
<div class="a" style="left:1px;top:630px;width:1028px;height:1px;background:#bfc2c6"></div>
<div class="a" style="left:1px;top:604px;width:1px;height:27px;background:#bfc2c6"></div>
<div class="a" style="left:82px;top:604px;width:1px;height:27px;background:#bfc2c6"></div>
<div class="a" style="left:161px;top:604px;width:1px;height:27px;background:#bfc2c6"></div>
<div class="a" style="left:239px;top:604px;width:1px;height:27px;background:#bfc2c6"></div>
<div class="a" style="left:333px;top:604px;width:1px;height:27px;background:#bfc2c6"></div>
<div class="a" style="left:374px;top:604px;width:1px;height:27px;background:#bfc2c6"></div>
<div class="a" style="left:490px;top:604px;width:1px;height:27px;background:#bfc2c6"></div>
<div class="a" style="left:540px;top:604px;width:1px;height:27px;background:#bfc2c6"></div>
<div class="a" style="left:627px;top:604px;width:1px;height:27px;background:#bfc2c6"></div>
<div class="a" style="left:681px;top:604px;width:1px;height:27px;background:#bfc2c6"></div>
<div class="a" style="left:749px;top:604px;width:1px;height:27px;background:#bfc2c6"></div>
<div class="a" style="left:818px;top:604px;width:1px;height:27px;background:#bfc2c6"></div>
<div class="a" style="left:888px;top:604px;width:1px;height:27px;background:#bfc2c6"></div>
<div class="a" style="left:928px;top:604px;width:1px;height:27px;background:#bfc2c6"></div>
<div class="a" style="left:968px;top:604px;width:1px;height:27px;background:#bfc2c6"></div>
<div class="a" style="left:1028px;top:604px;width:1px;height:27px;background:#bfc2c6"></div>
<div class="a" style="left:2px;top:605px;width:80px;height:25px;background:#cc3300"></div>
<div class="a" style="left:2px;top:630px;width:80px;height:1px;background:#f2a081"></div>
<div class="a t" style="left:1.5px;top:605.5px;width:80px;height:25px;line-height:25px;color:#fff">英冠</div>
<div class="a t" style="left:82.5px;top:605.5px;width:78px;height:25px;line-height:25px;">25-02-23</div>
<div class="a t" style="left:161.5px;top:605.5px;width:77px;height:25px;line-height:25px;">沃特福德</div>
<div class="a t" style="left:239.5px;top:605.5px;width:93px;height:25px;line-height:25px;"><span style="color:#c8141e">2-0</span>(2-0)</div>
<div class="a t" style="left:333.5px;top:605.5px;width:40px;height:25px;line-height:25px;">4-6</div>
<div class="a t" style="left:374.5px;top:605.5px;width:115px;height:25px;line-height:25px;color:#1f7a1f">卢顿</div>
<div class="a t" style="left:490.5px;top:605.5px;width:49px;height:25px;line-height:25px;">1.07</div>
<div class="a t" style="left:540.5px;top:605.5px;width:86px;height:25px;line-height:25px;">平/半</div>
<div class="a t" style="left:627.5px;top:605.5px;width:53px;height:25px;line-height:25px;">0.82</div>
<div class="a t" style="left:681.5px;top:605.5px;width:67px;height:25px;line-height:25px;">2.35</div>
<div class="a t" style="left:749.5px;top:605.5px;width:68px;height:25px;line-height:25px;">3.16</div>
<div class="a t" style="left:818.5px;top:605.5px;width:69px;height:25px;line-height:25px;">3.08</div>
<div class="a t" style="left:888.5px;top:605.5px;width:39px;height:25px;line-height:25px;color:#1111b0">负</div>
<div class="a t" style="left:928.5px;top:605.5px;width:39px;height:25px;line-height:25px;color:#1111b0">输</div>
<div class="a t" style="left:968.5px;top:605.5px;width:59px;height:25px;line-height:25px;color:#1111b0">小</div>
<div class="a" style="left:2px;top:631px;width:80px;height:25px;background:#cc3300"></div>
<div class="a" style="left:83px;top:631px;width:78px;height:25px;background:#f0f0f0"></div>
<div class="a" style="left:162px;top:631px;width:77px;height:25px;background:#f0f0f0"></div>
<div class="a" style="left:240px;top:631px;width:93px;height:25px;background:#f0f0f0"></div>
<div class="a" style="left:334px;top:631px;width:40px;height:25px;background:#f0f0f0"></div>
<div class="a" style="left:375px;top:631px;width:115px;height:25px;background:#f0f0f0"></div>
<div class="a" style="left:491px;top:631px;width:49px;height:25px;background:#fdf9f6"></div>
<div class="a" style="left:541px;top:631px;width:86px;height:25px;background:#fdf9f6"></div>
<div class="a" style="left:628px;top:631px;width:53px;height:25px;background:#fdf9f6"></div>
<div class="a" style="left:682px;top:631px;width:67px;height:25px;background:#eff7fb"></div>
<div class="a" style="left:750px;top:631px;width:68px;height:25px;background:#eff7fb"></div>
<div class="a" style="left:819px;top:631px;width:69px;height:25px;background:#eff7fb"></div>
<div class="a" style="left:889px;top:631px;width:39px;height:25px;background:#f0f0f0"></div>
<div class="a" style="left:929px;top:631px;width:39px;height:25px;background:#f0f0f0"></div>
<div class="a" style="left:969px;top:631px;width:59px;height:25px;background:#f0f0f0"></div>
<div class="a" style="left:1px;top:656px;width:1028px;height:1px;background:#bfc2c6"></div>
<div class="a" style="left:1px;top:630px;width:1px;height:27px;background:#bfc2c6"></div>
<div class="a" style="left:82px;top:630px;width:1px;height:27px;background:#bfc2c6"></div>
<div class="a" style="left:161px;top:630px;width:1px;height:27px;background:#bfc2c6"></div>
<div class="a" style="left:239px;top:630px;width:1px;height:27px;background:#bfc2c6"></div>
<div class="a" style="left:333px;top:630px;width:1px;height:27px;background:#bfc2c6"></div>
<div class="a" style="left:374px;top:630px;width:1px;height:27px;background:#bfc2c6"></div>
<div class="a" style="left:490px;top:630px;width:1px;height:27px;background:#bfc2c6"></div>
<div class="a" style="left:540px;top:630px;width:1px;height:27px;background:#bfc2c6"></div>
<div class="a" style="left:627px;top:630px;width:1px;height:27px;background:#bfc2c6"></div>
<div class="a" style="left:681px;top:630px;width:1px;height:27px;background:#bfc2c6"></div>
<div class="a" style="left:749px;top:630px;width:1px;height:27px;background:#bfc2c6"></div>
<div class="a" style="left:818px;top:630px;width:1px;height:27px;background:#bfc2c6"></div>
<div class="a" style="left:888px;top:630px;width:1px;height:27px;background:#bfc2c6"></div>
<div class="a" style="left:928px;top:630px;width:1px;height:27px;background:#bfc2c6"></div>
<div class="a" style="left:968px;top:630px;width:1px;height:27px;background:#bfc2c6"></div>
<div class="a" style="left:1028px;top:630px;width:1px;height:27px;background:#bfc2c6"></div>
<div class="a" style="left:2px;top:631px;width:80px;height:25px;background:#cc3300"></div>
<div class="a" style="left:2px;top:656px;width:80px;height:1px;background:#f2a081"></div>
<div class="a t" style="left:1.5px;top:631.5px;width:80px;height:25px;line-height:25px;color:#fff">英冠</div>
<div class="a t" style="left:82.5px;top:631.5px;width:78px;height:25px;line-height:25px;">25-02-20</div>
<div class="a t" style="left:161.5px;top:631.5px;width:77px;height:25px;line-height:25px;color:#1f7a1f">卢顿</div>
<div class="a t" style="left:239.5px;top:631.5px;width:93px;height:25px;line-height:25px;"><span style="color:#c8141e">1-1</span>(0-0)</div>
<div class="a t" style="left:333.5px;top:631.5px;width:40px;height:25px;line-height:25px;">10-2</div>
<div class="a t" style="left:374.5px;top:631.5px;width:115px;height:25px;line-height:25px;">普利茅斯</div>
<div class="a t" style="left:490.5px;top:631.5px;width:49px;height:25px;line-height:25px;">0.85</div>
<div class="a t" style="left:540.5px;top:631.5px;width:86px;height:25px;line-height:25px;">半球</div>
<div class="a t" style="left:627.5px;top:631.5px;width:53px;height:25px;line-height:25px;">1.04</div>
<div class="a t" style="left:681.5px;top:631.5px;width:67px;height:25px;line-height:25px;">1.83</div>
<div class="a t" style="left:749.5px;top:631.5px;width:68px;height:25px;line-height:25px;">3.40</div>
<div class="a t" style="left:818.5px;top:631.5px;width:69px;height:25px;line-height:25px;">4.46</div>
<div class="a t" style="left:888.5px;top:631.5px;width:39px;height:25px;line-height:25px;color:#1f7a1f">平</div>
<div class="a t" style="left:928.5px;top:631.5px;width:39px;height:25px;line-height:25px;color:#1111b0">输</div>
<div class="a t" style="left:968.5px;top:631.5px;width:59px;height:25px;line-height:25px;color:#1111b0">小</div>
<div class="a" style="left:2px;top:657px;width:80px;height:25px;background:#cc3300"></div>
<div class="a" style="left:83px;top:657px;width:78px;height:25px;background:#ffffff"></div>
<div class="a" style="left:162px;top:657px;width:77px;height:25px;background:#ffffff"></div>
<div class="a" style="left:240px;top:657px;width:93px;height:25px;background:#ffffff"></div>
<div class="a" style="left:334px;top:657px;width:40px;height:25px;background:#ffffff"></div>
<div class="a" style="left:375px;top:657px;width:115px;height:25px;background:#ffffff"></div>
<div class="a" style="left:491px;top:657px;width:49px;height:25px;background:#fdf9f6"></div>
<div class="a" style="left:541px;top:657px;width:86px;height:25px;background:#fdf9f6"></div>
<div class="a" style="left:628px;top:657px;width:53px;height:25px;background:#fdf9f6"></div>
<div class="a" style="left:682px;top:657px;width:67px;height:25px;background:#eff7fb"></div>
<div class="a" style="left:750px;top:657px;width:68px;height:25px;background:#eff7fb"></div>
<div class="a" style="left:819px;top:657px;width:69px;height:25px;background:#eff7fb"></div>
<div class="a" style="left:889px;top:657px;width:39px;height:25px;background:#ffffff"></div>
<div class="a" style="left:929px;top:657px;width:39px;height:25px;background:#ffffff"></div>
<div class="a" style="left:969px;top:657px;width:59px;height:25px;background:#ffffff"></div>
<div class="a" style="left:1px;top:682px;width:1028px;height:1px;background:#bfc2c6"></div>
<div class="a" style="left:1px;top:656px;width:1px;height:27px;background:#bfc2c6"></div>
<div class="a" style="left:82px;top:656px;width:1px;height:27px;background:#bfc2c6"></div>
<div class="a" style="left:161px;top:656px;width:1px;height:27px;background:#bfc2c6"></div>
<div class="a" style="left:239px;top:656px;width:1px;height:27px;background:#bfc2c6"></div>
<div class="a" style="left:333px;top:656px;width:1px;height:27px;background:#bfc2c6"></div>
<div class="a" style="left:374px;top:656px;width:1px;height:27px;background:#bfc2c6"></div>
<div class="a" style="left:490px;top:656px;width:1px;height:27px;background:#bfc2c6"></div>
<div class="a" style="left:540px;top:656px;width:1px;height:27px;background:#bfc2c6"></div>
<div class="a" style="left:627px;top:656px;width:1px;height:27px;background:#bfc2c6"></div>
<div class="a" style="left:681px;top:656px;width:1px;height:27px;background:#bfc2c6"></div>
<div class="a" style="left:749px;top:656px;width:1px;height:27px;background:#bfc2c6"></div>
<div class="a" style="left:818px;top:656px;width:1px;height:27px;background:#bfc2c6"></div>
<div class="a" style="left:888px;top:656px;width:1px;height:27px;background:#bfc2c6"></div>
<div class="a" style="left:928px;top:656px;width:1px;height:27px;background:#bfc2c6"></div>
<div class="a" style="left:968px;top:656px;width:1px;height:27px;background:#bfc2c6"></div>
<div class="a" style="left:1028px;top:656px;width:1px;height:27px;background:#bfc2c6"></div>
<div class="a" style="left:2px;top:657px;width:80px;height:25px;background:#cc3300"></div>
<div class="a" style="left:2px;top:682px;width:80px;height:1px;background:#f2a081"></div>
<div class="a t" style="left:1.5px;top:657.5px;width:80px;height:25px;line-height:25px;color:#fff">英冠</div>
<div class="a t" style="left:82.5px;top:657.5px;width:78px;height:25px;line-height:25px;">25-02-15</div>
<div class="a t" style="left:161.5px;top:657.5px;width:77px;height:25px;line-height:25px;color:#1f7a1f">卢顿</div>
<div class="a t" style="left:239.5px;top:657.5px;width:93px;height:25px;line-height:25px;"><span style="color:#c8141e">0-1</span>(0-0)</div>
<div class="a t" style="left:333.5px;top:657.5px;width:40px;height:25px;line-height:25px;">5-3</div>
<div class="a t" style="left:374.5px;top:657.5px;width:115px;height:25px;line-height:25px;">谢菲尔德联队</div>
<div class="a t" style="left:490.5px;top:657.5px;width:49px;height:25px;line-height:25px;">0.97</div>
<div class="a t" style="left:540.5px;top:657.5px;width:86px;height:25px;line-height:25px;">平手</div>
<div class="a t" style="left:627.5px;top:657.5px;width:53px;height:25px;line-height:25px;">0.92</div>
<div class="a t" style="left:681.5px;top:657.5px;width:67px;height:25px;line-height:25px;">2.93</div>
<div class="a t" style="left:749.5px;top:657.5px;width:68px;height:25px;line-height:25px;">3.20</div>
<div class="a t" style="left:818.5px;top:657.5px;width:69px;height:25px;line-height:25px;">2.43</div>
<div class="a t" style="left:888.5px;top:657.5px;width:39px;height:25px;line-height:25px;color:#1111b0">负</div>
<div class="a t" style="left:928.5px;top:657.5px;width:39px;height:25px;line-height:25px;color:#1111b0">输</div>
<div class="a t" style="left:968.5px;top:657.5px;width:59px;height:25px;line-height:25px;color:#1111b0">小</div>
<div class="a" style="left:2px;top:683px;width:80px;height:25px;background:#cc3300"></div>
<div class="a" style="left:83px;top:683px;width:78px;height:25px;background:#f0f0f0"></div>
<div class="a" style="left:162px;top:683px;width:77px;height:25px;background:#f0f0f0"></div>
<div class="a" style="left:240px;top:683px;width:93px;height:25px;background:#f0f0f0"></div>
<div class="a" style="left:334px;top:683px;width:40px;height:25px;background:#f0f0f0"></div>
<div class="a" style="left:375px;top:683px;width:115px;height:25px;background:#f0f0f0"></div>
<div class="a" style="left:491px;top:683px;width:49px;height:25px;background:#fdf9f6"></div>
<div class="a" style="left:541px;top:683px;width:86px;height:25px;background:#fdf9f6"></div>
<div class="a" style="left:628px;top:683px;width:53px;height:25px;background:#fdf9f6"></div>
<div class="a" style="left:682px;top:683px;width:67px;height:25px;background:#eff7fb"></div>
<div class="a" style="left:750px;top:683px;width:68px;height:25px;background:#eff7fb"></div>
<div class="a" style="left:819px;top:683px;width:69px;height:25px;background:#eff7fb"></div>
<div class="a" style="left:889px;top:683px;width:39px;height:25px;background:#f0f0f0"></div>
<div class="a" style="left:929px;top:683px;width:39px;height:25px;background:#f0f0f0"></div>
<div class="a" style="left:969px;top:683px;width:59px;height:25px;background:#f0f0f0"></div>
<div class="a" style="left:1px;top:708px;width:1028px;height:1px;background:#bfc2c6"></div>
<div class="a" style="left:1px;top:682px;width:1px;height:27px;background:#bfc2c6"></div>
<div class="a" style="left:82px;top:682px;width:1px;height:27px;background:#bfc2c6"></div>
<div class="a" style="left:161px;top:682px;width:1px;height:27px;background:#bfc2c6"></div>
<div class="a" style="left:239px;top:682px;width:1px;height:27px;background:#bfc2c6"></div>
<div class="a" style="left:333px;top:682px;width:1px;height:27px;background:#bfc2c6"></div>
<div class="a" style="left:374px;top:682px;width:1px;height:27px;background:#bfc2c6"></div>
<div class="a" style="left:490px;top:682px;width:1px;height:27px;background:#bfc2c6"></div>
<div class="a" style="left:540px;top:682px;width:1px;height:27px;background:#bfc2c6"></div>
<div class="a" style="left:627px;top:682px;width:1px;height:27px;background:#bfc2c6"></div>
<div class="a" style="left:681px;top:682px;width:1px;height:27px;background:#bfc2c6"></div>
<div class="a" style="left:749px;top:682px;width:1px;height:27px;background:#bfc2c6"></div>
<div class="a" style="left:818px;top:682px;width:1px;height:27px;background:#bfc2c6"></div>
<div class="a" style="left:888px;top:682px;width:1px;height:27px;background:#bfc2c6"></div>
<div class="a" style="left:928px;top:682px;width:1px;height:27px;background:#bfc2c6"></div>
<div class="a" style="left:968px;top:682px;width:1px;height:27px;background:#bfc2c6"></div>
<div class="a" style="left:1028px;top:682px;width:1px;height:27px;background:#bfc2c6"></div>
<div class="a" style="left:2px;top:683px;width:80px;height:25px;background:#cc3300"></div>
<div class="a" style="left:2px;top:708px;width:80px;height:1px;background:#f2a081"></div>
<div class="a t" style="left:1.5px;top:683.5px;width:80px;height:25px;line-height:25px;color:#fff">英冠</div>
<div class="a t" style="left:82.5px;top:683.5px;width:78px;height:25px;line-height:25px;">25-02-13</div>
<div class="a t" style="left:161.5px;top:683.5px;width:77px;height:25px;line-height:25px;">桑德兰</div>
<div class="a t" style="left:239.5px;top:683.5px;width:93px;height:25px;line-height:25px;"><span style="color:#c8141e">2-0</span>(1-0)</div>
<div class="a t" style="left:333.5px;top:683.5px;width:40px;height:25px;line-height:25px;">6-1</div>
<div class="a t" style="left:374.5px;top:683.5px;width:115px;height:25px;line-height:25px;color:#1f7a1f">卢顿</div>
<div class="a t" style="left:490.5px;top:683.5px;width:49px;height:25px;line-height:25px;">0.80</div>
<div class="a t" style="left:540.5px;top:683.5px;width:86px;height:25px;line-height:25px;">一球</div>
<div class="a t" style="left:627.5px;top:683.5px;width:53px;height:25px;line-height:25px;">1.09</div>
<div class="a t" style="left:681.5px;top:683.5px;width:67px;height:25px;line-height:25px;">1.54</div>
<div class="a t" style="left:749.5px;top:683.5px;width:68px;height:25px;line-height:25px;">3.93</div>
<div class="a t" style="left:818.5px;top:683.5px;width:69px;height:25px;line-height:25px;">6.32</div>
<div class="a t" style="left:888.5px;top:683.5px;width:39px;height:25px;line-height:25px;color:#1111b0">负</div>
<div class="a t" style="left:928.5px;top:683.5px;width:39px;height:25px;line-height:25px;color:#1111b0">输</div>
<div class="a t" style="left:968.5px;top:683.5px;width:59px;height:25px;line-height:25px;color:#1111b0">小</div>
<div class="a" style="left:1px;top:709px;width:1028px;height:25px;background:#fff"></div>
<div class="a" style="left:1px;top:708px;width:1px;height:27px;background:#bfc2c6"></div>
<div class="a" style="left:1028px;top:708px;width:1px;height:27px;background:#bfc2c6"></div>
<div class="a" style="left:1px;top:734px;width:1028px;height:1px;background:#bfc2c6"></div>
<div class="a t" style="left:1.5px;top:709.5px;width:1026px;height:25px;line-height:25px;color:#333;letter-spacing:0.2px">近<span style="color:#c8141e">10</span>场,胜3平3负4, 胜率:<span style="color:#c8141e">30%</span> 让胜率:<span style="color:#c8141e">40%</span> 大率:<span style="color:#c8141e">20%</span> 单率:<span style="color:#c8141e">40%</span></div>
</body></html>
